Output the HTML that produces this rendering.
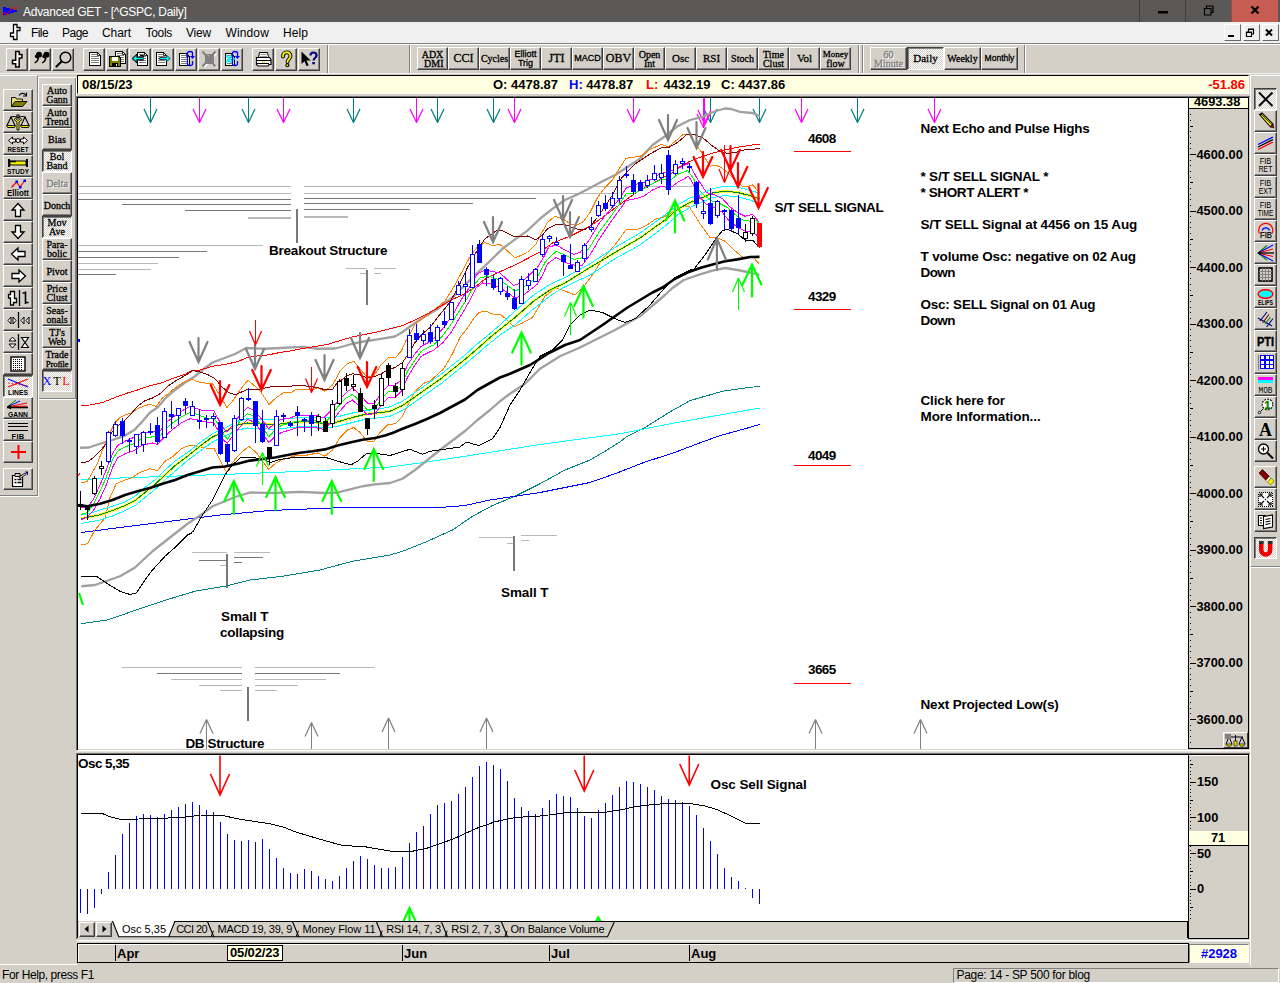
<!DOCTYPE html><html><head><meta charset="utf-8"><title>Advanced GET</title><style>
*{box-sizing:border-box;margin:0;padding:0}
html,body{width:1280px;height:983px;overflow:hidden;background:#d4d0c8;font-family:"Liberation Sans",sans-serif;font-size:12px;color:#000}
.abs{position:absolute}
#title{left:0;top:0;width:1280px;height:22px;background:#5b5957;color:#fff}
#title .t{left:23px;top:4.5px;font-size:12px;white-space:nowrap;letter-spacing:-0.27px}
.wb{top:0;height:22px;width:46px;border-left:1px solid #3f3e3d}
#menu{left:0;top:22px;width:1280px;height:21px;background:#f0f0f0}
#menu span{position:absolute;top:4px;font-size:12px;white-space:nowrap}
.mb{top:24px;width:17px;height:17px;background:#f0f0f0;border:1px solid;border-color:#fff #696969 #696969 #fff}
.btn{position:absolute;background:#d4d0c8;border:1px solid;border-color:#fff #404040 #404040 #fff;box-shadow:inset -1px -1px 0 #808080}
.btn.dn{border-color:#404040 #fff #fff #404040;box-shadow:inset 1px 1px 0 #808080;background-color:#e9e7e3;background-image:repeating-conic-gradient(#fff 0 25%,#d4d0c8 0 50%);background-size:2px 2px}
.btn svg{position:absolute;left:0;top:0}
.sb{font-family:"Liberation Serif",serif;-webkit-text-stroke:0.3px currentColor;font-size:10px;line-height:8px;text-align:center;white-space:nowrap;display:flex;flex-direction:column;align-items:center;justify-content:center;overflow:hidden}
.sb.dis{color:#808080;text-shadow:1px 1px 0 #fff}
.info{font-weight:bold;font-size:13px;white-space:nowrap;line-height:15px}
.lbl{position:absolute;font-weight:bold;white-space:nowrap;font-size:13px;line-height:16px}
.sc{position:absolute;font-weight:bold;font-size:12.8px;white-space:nowrap;line-height:14px}
.hl{position:absolute;height:1px}
.vl{position:absolute;width:1px}
.tab{position:absolute;top:923px;font-size:11px;white-space:nowrap;line-height:13px}
</style></head><body><div id="title" class="abs">
<svg class="abs" style="left:0;top:0" width="22" height="22" viewBox="0 0 22 22"><path d="M3 7h3v1h4v1h3v1h4v2h-3v1h-4v1h-4v1h-3z" fill="#0000ff" shape-rendering="crispEdges"/><path d="M2 15l2.500-2.500 2 2 7-7.500 1.500 2 3-2" stroke="#ff0000" stroke-width="1.100" fill="none" stroke-dasharray="1.400 .5"/></svg>
<div class="abs t">Advanced GET - [^GSPC, Daily]</div>
<div class="abs wb" style="left:1139px"><svg width="46" height="22" viewBox="0 0 46 22" ><rect x="18" y="11" width="10" height="2.500" fill="#000"/></svg></div>
<div class="abs wb" style="left:1185px"><svg width="46" height="22" viewBox="0 0 46 22" ><path d="M18.500 8.500h6.500v6.500h-6.500zM20.500 8.500v-2.500h6.500v6.500h-2" fill="none" stroke="#000" stroke-width="1.200"/></svg></div>
<div class="abs wb" style="left:1231px;width:47px;background:#c75c52;border-left:1px solid #9c4a43"><svg width="46" height="22" viewBox="0 0 46 22" ><path d="M19.5 6.5l7 7M26.5 6.5l-7 7" stroke="#000" stroke-width="2.2"/></svg></div>
</div>
<div id="menu" class="abs">
<svg class="abs" style="left:0;top:0" width="24" height="21" viewBox="0 22 24 21"><path d="M13.500 24.500h3.500v3h3v3h-3v9h-3.500v-3h-3v-3.500h3z" fill="#fff" stroke="#000" stroke-width="1.300"/></svg>
<span style="left:31px;letter-spacing:-0.58px">File</span>
<span style="left:62px;letter-spacing:-0.5px">Page</span>
<span style="left:102px;letter-spacing:-0.07px">Chart</span>
<span style="left:145.5px;letter-spacing:-0.3px">Tools</span>
<span style="left:186px;letter-spacing:-0.2px">View</span>
<span style="left:225.5px;letter-spacing:0.13px">Window</span>
<span style="left:283px;letter-spacing:0.08px">Help</span>
</div>
<div class="abs mb" style="left:1224px"><svg width="15" height="15" viewBox="0 0 15 15" ><rect x="3" y="10" width="6" height="2" fill="#000"/></svg></div>
<div class="abs mb" style="left:1243px"><svg width="15" height="15" viewBox="0 0 15 15" ><path d="M2.5 7.5h5v4h-5zM4.5 7v-2.5h5v4.5h-2" fill="none" stroke="#000" stroke-width="1.2"/><path d="M2 7h6M4 4h6" stroke="#000" stroke-width="1"/></svg></div>
<div class="abs mb" style="left:1262px"><svg width="15" height="15" viewBox="0 0 15 15" ><path d="M3 4.5l6 6M9 4.5l-6 6" stroke="#000" stroke-width="2"/></svg></div>
<div class="abs" style="left:0;top:43px;width:1280px;height:1px;background:#808080"></div>
<div class="abs" style="left:0;top:44px;width:1280px;height:1px;background:#fff"></div>
<div class="abs" style="left:0;top:73px;width:1280px;height:1px;background:#f2f1ed"></div>
<div class="btn " style="left:6px;top:48px;width:22px;height:23px;"><svg width="20" height="21" viewBox="0 0 20 21" ><path d="M8.700 2.500h3.500v3h2.700v3.500h-2.700v9h-3.500v-3.200h-3.200v-3.500h3.200z" fill="#fff" stroke="#000" stroke-width="1.500" stroke-linejoin="miter"/></svg></div>
<div class="btn " style="left:29px;top:48px;width:22px;height:23px;"><svg width="20" height="21" viewBox="0 0 20 21" ><g transform="translate(-1.500,-1.500) scale(1.150)"><path d="M6.500 6a2.600 2.600 0 1 1 2.700 2.800c0 2.500-1.500 4.400-3.600 5.200l-.5-1c1.600-.8 2.500-2 2.500-3.600-1.200-.1-3.500-1.400-1.100-3.400zM13 6a2.600 2.600 0 1 1 2.700 2.800c0 2.500-1.500 4.400-3.600 5.200l-.5-1c1.600-.8 2.500-2 2.500-3.600-1.200-.1-3.500-1.400-1.100-3.400z" fill="#000"/></g></svg></div>
<div class="btn " style="left:52px;top:48px;width:22px;height:23px;"><svg width="20" height="21" viewBox="0 0 20 21" ><circle cx="12.5" cy="8.500" r="5.300" fill="none" stroke="#000" stroke-width="1.5"/><path d="M8.500 12.500l-5 5" stroke="#000" stroke-width="2.200" stroke-linecap="round"/></svg></div>
<div class="btn " style="left:83px;top:48px;width:22px;height:23px;"><svg width="20" height="21" viewBox="0 0 20 21" ><path d="M5.5 3.5h8l3 3v10h-11z" fill="#fff" stroke="#000" shape-rendering="crispEdges"/><path d="M13.5 3.5v3h3" fill="none" stroke="#000" stroke-width=".8"/><path d="M7 5.5h6M7 7.5h8M7 9.5h8M7 11.5h8M7 13.5h8" stroke="#808080" shape-rendering="crispEdges"/></svg></div>
<div class="btn " style="left:106px;top:48px;width:22px;height:23px;"><svg width="20" height="21" viewBox="0 0 20 21" ><path d="M8.5 2.5h7l3 3v9h-10z" fill="#fff" stroke="#000" shape-rendering="crispEdges"/><path d="M15.5 2.5v3h3" fill="none" stroke="#000" stroke-width=".8"/><path d="M10 4.5h5M10 6.5h7M10 8.5h7M10 10.5h7M10 12.5h7" stroke="#808080" shape-rendering="crispEdges"/><path d="M2.500 7.500h9.500l1.500 1.500v8.500h-11z" fill="#808000" stroke="#000" shape-rendering="crispEdges"/><rect x="5" y="8" width="6" height="4" fill="#fff" shape-rendering="crispEdges"/><rect x="5" y="14" width="6" height="3" fill="#000" shape-rendering="crispEdges"/><rect x="9" y="15" width="1" height="2" fill="#fff" shape-rendering="crispEdges"/></svg></div>
<div class="btn " style="left:129px;top:48px;width:22px;height:23px;"><svg width="20" height="21" viewBox="0 0 20 21" ><path d="M7.5 3.5h7l3 3v10h-10z" fill="#fff" stroke="#000" shape-rendering="crispEdges"/><path d="M14.5 3.5v3h3" fill="none" stroke="#000" stroke-width=".8"/><path d="M9 5.5h5M9 7.5h7M9 9.5h7M9 11.5h7M9 13.5h7" stroke="#808080" shape-rendering="crispEdges"/><path d="M2 9.500l5-4.500v3h6.500v-1.500h-3.500M2 9.500l5 4.500v-3h6.500" fill="none" stroke="#000" stroke-width="1"/><path d="M2.800 9.500l4-3.500v2.500h6.500v2h-6.500v2.500z" fill="#0ff" stroke="#000" stroke-width=".7"/></svg></div>
<div class="btn " style="left:152px;top:48px;width:22px;height:23px;"><svg width="20" height="21" viewBox="0 0 20 21" ><path d="M3.5 3.5h7l3 3v10h-10z" fill="#fff" stroke="#000" shape-rendering="crispEdges"/><path d="M10.5 3.5v3h3" fill="none" stroke="#000" stroke-width=".8"/><path d="M5 5.5h5M5 7.5h7M5 9.5h7M5 11.5h7M5 13.5h7" stroke="#808080" shape-rendering="crispEdges"/><path d="M17.200 9.500l-4-3.500v2.500h-6.500v2h6.500v2.500z" fill="#0ff" stroke="#000" stroke-width=".7"/></svg></div>
<div class="btn " style="left:175px;top:48px;width:22px;height:23px;"><svg width="20" height="21" viewBox="0 0 20 21" ><path d="M3.5 4.5h7l3 3v9h-10z" fill="#fff" stroke="#000" shape-rendering="crispEdges"/><path d="M10.5 4.5v3h3" fill="none" stroke="#000" stroke-width=".8"/><path d="M5 6.5h5M5 8.5h7M5 10.5h7M5 12.5h7M5 14.5h7" stroke="#808080" shape-rendering="crispEdges"/><path d="M11.500 4c0-2 5-2 5 0v3M11.500 15c0 2 5 2 5 0v-3M11.500 4v11" stroke="#00f" fill="none" stroke-width="1.300"/><path d="M14 7h5l-2.500 3z" fill="#00f"/></svg></div>
<div class="btn " style="left:198px;top:48px;width:22px;height:23px;"><svg width="20" height="21" viewBox="0 0 20 21" ><path d="M4 3l12 14M16 3l-12 14" stroke="#fff" stroke-width="2.600" transform="translate(1,1)"/><rect x="6" y="5" width="9" height="10" fill="#808080"/><path d="M7 7h3M12 7h2M7 13h2M12 13h2" stroke="#d4d0c8"/><path d="M3.500 2.500l13 15M16.500 2.500l-13 15" stroke="#808080" stroke-width="2.200"/></svg></div>
<div class="btn " style="left:221px;top:48px;width:22px;height:23px;"><svg width="20" height="21" viewBox="0 0 20 21" ><path d="M3.5 4.5h6l3 3v9h-9z" fill="#fff" stroke="#000" shape-rendering="crispEdges"/><path d="M9.5 4.5v3h3" fill="none" stroke="#000" stroke-width=".8"/><path d="M5 6.5h4M5 8.5h6M5 10.5h6M5 12.5h6M5 14.5h6" stroke="#808080" shape-rendering="crispEdges"/><path d="M4 6.500l4 3.500-4 3.500M8 6.500l4 3.500-4 3.500" stroke="#0ff" stroke-width="1.800" fill="none"/><path d="M10.500 4c0-2 5-2 5 0v3M10.500 15c0 2 5 2 5 0v-3M10.500 4v11" stroke="#00f" fill="none" stroke-width="1.300"/><path d="M13 7h5l-2.500 3z" fill="#00f"/></svg></div>
<div class="btn " style="left:252px;top:48px;width:22px;height:23px;"><svg width="20" height="21" viewBox="0 0 20 21" ><path d="M6.500 3.500h8l1 5h-10z" fill="#fff" stroke="#000"/><path d="M7.500 5.500h6M7 7.500h7" stroke="#808080" stroke-width=".8"/><path d="M3.500 8.500h13l1.500 2v5h-2l-1 1.500h-10l-1.500-1.500z" fill="#fff" stroke="#000" stroke-width="1.200"/><path d="M3.500 11.500h14.500M4 14.500h12" stroke="#000" stroke-width="1.200"/><rect x="9" y="12.500" width="3" height="1.200" fill="#e8e000"/></svg></div>
<div class="btn " style="left:275px;top:48px;width:22px;height:23px;"><svg width="20" height="21" viewBox="0 0 20 21" ><path d="M7 7.500c0-5.500 7.500-5.500 7.500-.5 0 3-3 3-3 6" fill="none" stroke="#000" stroke-width="3.800" stroke-linecap="round"/><path d="M7 7.500c0-5.500 7.500-5.500 7.500-.5 0 3-3 3-3 6" fill="none" stroke="#f0f000" stroke-width="1.900" stroke-linecap="round"/><circle cx="11.400" cy="16.200" r="2" fill="#000"/><circle cx="11.400" cy="16.200" r="1" fill="#f0f000"/></svg></div>
<div class="btn " style="left:298px;top:48px;width:22px;height:23px;"><svg width="20" height="21" viewBox="0 0 20 21" ><path d="M2.500 2.500v12.500l3-2.800 2.200 5 2-.9-2.200-4.800h4.200z" fill="#000"/><path d="M11.500 6.500c0-4 6-4 6 0 0 2.500-3 2.500-3 5" fill="none" stroke="#000080" stroke-width="2.200"/><rect x="13.300" y="13" width="2.600" height="2.300" fill="#000080"/></svg></div>
<div class="abs" style="left:327px;top:45px;width:1px;height:28px;background:#808080"></div><div class="abs" style="left:328px;top:45px;width:1px;height:28px;background:#fff"></div>
<div class="abs" style="left:409px;top:45px;width:1px;height:28px;background:#808080"></div><div class="abs" style="left:410px;top:45px;width:1px;height:28px;background:#fff"></div>
<div class="abs" style="left:858px;top:45px;width:1px;height:28px;background:#808080"></div><div class="abs" style="left:859px;top:45px;width:1px;height:28px;background:#fff"></div>
<div class="abs" style="left:1024px;top:45px;width:1px;height:28px;background:#808080"></div><div class="abs" style="left:1025px;top:45px;width:1px;height:28px;background:#fff"></div>
<div class="abs" style="left:862px;top:45px;width:1px;height:28px;background:#808080"></div><div class="abs" style="left:863px;top:45px;width:1px;height:28px;background:#fff"></div>
<div class="btn sb " style="left:417px;top:47px;width:31px;height:23px;font-size:10px;line-height:9px;"><div>ADX</div><div>&nbsp;DMI</div></div>
<div class="btn sb " style="left:448px;top:47px;width:31px;height:23px;font-size:12px;line-height:9px;"><div>CCI</div></div>
<div class="btn sb " style="left:479px;top:47px;width:31px;height:23px;font-size:10px;line-height:9px;"><div>Cycles</div></div>
<div class="btn sb " style="left:510px;top:47px;width:31px;height:23px;font-size:10px;line-height:9px;font-family:'Liberation Sans',sans-serif;font-size:9px;"><div>Elliott</div><div>Trig</div></div>
<div class="btn sb " style="left:541px;top:47px;width:31px;height:23px;font-size:12px;line-height:9px;"><div>JTI</div></div>
<div class="btn sb " style="left:572px;top:47px;width:31px;height:23px;font-size:9px;line-height:9px;font-family:'Liberation Sans',sans-serif;font-size:9px;"><div>MACD</div></div>
<div class="btn sb " style="left:603px;top:47px;width:31px;height:23px;font-size:12px;line-height:9px;"><div>OBV</div></div>
<div class="btn sb " style="left:634px;top:47px;width:31px;height:23px;font-size:10px;line-height:9px;"><div>Open</div><div>Int</div></div>
<div class="btn sb " style="left:665px;top:47px;width:31px;height:23px;font-size:11px;line-height:9px;"><div>Osc</div></div>
<div class="btn sb " style="left:696px;top:47px;width:31px;height:23px;font-size:11px;line-height:9px;"><div>RSI</div></div>
<div class="btn sb " style="left:727px;top:47px;width:31px;height:23px;font-size:10px;line-height:9px;"><div>Stoch</div></div>
<div class="btn sb " style="left:758px;top:47px;width:31px;height:23px;font-size:10px;line-height:9px;"><div>Time</div><div>Clust</div></div>
<div class="btn sb " style="left:789px;top:47px;width:31px;height:23px;font-size:11px;line-height:9px;"><div>Vol</div></div>
<div class="btn sb " style="left:820px;top:47px;width:31px;height:23px;font-size:10px;line-height:9px;"><div><span style="font-size:9px">Money</span></div><div>flow</div></div>
<div class="btn sb dis" style="left:870px;top:47px;width:37px;height:23px;font-size:10px;line-height:9px;"><div>60</div><div>Minute</div></div>
<div class="btn sb dn" style="left:907px;top:47px;width:37px;height:23px;font-size:11px;line-height:9px;"><div>Daily</div></div>
<div class="btn sb " style="left:944px;top:47px;width:37px;height:23px;font-size:10px;line-height:9px;"><div>Weekly</div></div>
<div class="btn sb " style="left:981px;top:47px;width:37px;height:23px;font-size:8.5px;line-height:9px;font-family:'Liberation Sans',sans-serif;"><div>Monthly</div></div>
<div class="abs" style="left:0;top:75px;width:37px;height:1px;background:#fff"></div>
<div class="abs" style="left:1250px;top:75px;width:30px;height:1px;background:#fff"></div>
<div class="abs" style="left:37px;top:76px;width:1px;height:420px;background:#808080"></div>
<div class="abs" style="left:38px;top:77px;width:1px;height:420px;background:#fff"></div>
<div class="abs" style="left:0px;top:495px;width:38px;height:1px;background:#808080"></div><div class="abs" style="left:0px;top:496px;width:39px;height:1px;background:#fff"></div>
<div class="abs" style="left:38px;top:77px;width:38px;height:1px;background:#fff"></div>
<div class="abs" style="left:75px;top:78px;width:1px;height:320px;background:#808080"></div><div class="abs" style="left:76px;top:78px;width:1px;height:321px;background:#fff"></div>
<div class="btn " style="left:3px;top:89px;width:30px;height:22px;"><svg width="28" height="20" viewBox="0 0 28 20" ><path d="M7.500 7.500h4l1 1.500h6v7.500h-11z" fill="#e8e070" stroke="#000" stroke-width=".9"/><path d="M7.500 16.500l3.500-5h12l-4.500 5z" fill="#808000" stroke="#000" stroke-width=".9"/><path d="M15 5.500c1.500-2.500 5-3 7-.5M22.500 2.500v3.500h-3.500" fill="none" stroke="#000" stroke-width="1.100"/></svg></div>
<div class="btn " style="left:3px;top:111px;width:30px;height:22px;"><svg width="28" height="20" viewBox="0 0 28 20" ><path d="M13 3h2v3h-2zM6 5.500c3-2 5-1 8 0c3-1 5-2 8 0" fill="none" stroke="#000" stroke-width="1.100"/><path d="M7 5l-4 8.500M7 5l4 8.500M21 5l-4 8.500M21 5l4 8.500" stroke="#000" fill="none" stroke-width="1.100"/><path d="M2.500 13.500h9l-1 2h-7zM16.500 13.500h9l-1 2h-7z" fill="#f0f000" stroke="#000" stroke-width=".9"/><path d="M10 7.500l3 2.500v8h2v-8l3-2.500-1.500-1-2.500 2-2.500-2z" fill="#f0f000" stroke="#000" stroke-width=".9"/></svg></div>
<div class="btn " style="left:3px;top:133px;width:30px;height:22px;"><svg width="28" height="20" viewBox="0 0 28 20" ><path d="M4.500 6.500l4-3.500v2h3v3h-3v2z" fill="#fff" stroke="#000" stroke-width="1"/><path d="M23.500 6.500l-4-3.500v2h-3v3h3v2z" fill="#fff" stroke="#000" stroke-width="1"/><circle cx="14" cy="6.500" r="2" fill="#fff" stroke="#000" stroke-width="1"/><text x="14" y="17.5" text-anchor="middle" font-family="Liberation Sans,sans-serif" font-weight="bold" font-size="7.5" letter-spacing="0" fill="#000" textLength="21" lengthAdjust="spacingAndGlyphs">RESET</text></svg></div>
<div class="btn " style="left:3px;top:155px;width:30px;height:22px;"><svg width="28" height="20" viewBox="0 0 28 20" ><path d="M5 3v8M23 3v8" stroke="#000" stroke-width="2"/><rect x="6" y="5" width="16" height="4" fill="#f0f000" stroke="#000" stroke-width="1"/><path d="M6 5.500h6" stroke="#000" stroke-width="1.500"/><text x="14" y="18" text-anchor="middle" font-family="Liberation Sans,sans-serif" font-weight="bold" font-size="7.5" letter-spacing="0" fill="#000" textLength="22" lengthAdjust="spacingAndGlyphs">STUDY</text></svg></div>
<div class="btn " style="left:3px;top:177px;width:30px;height:22px;"><svg width="28" height="20" viewBox="0 0 28 20" ><path d="M7.500 9.500l5-5.500 3.500 5 4.500-6" stroke="#f00" fill="none" stroke-width="1.200"/><rect x="11.500" y="2.500" width="2.500" height="2.500" fill="#00f"/><rect x="15" y="8" width="2.500" height="2.500" fill="#00f"/><rect x="19.500" y="1.500" width="2.500" height="2.500" fill="#00f"/><text x="14" y="18" text-anchor="middle" font-family="Liberation Sans,sans-serif" font-weight="bold" font-size="9" letter-spacing="0" fill="#000" textLength="22" lengthAdjust="spacingAndGlyphs">Elliott</text></svg></div>
<div class="btn " style="left:3px;top:199px;width:30px;height:22px;"><svg width="28" height="20" viewBox="0 0 28 20" ><path d="M14 3.500l6 6.500h-3.500v6.500h-5v-6.500h-3.500z" fill="#fff" stroke="#000" stroke-width="1.300"/></svg></div>
<div class="btn " style="left:3px;top:221px;width:30px;height:22px;"><svg width="28" height="20" viewBox="0 0 28 20" ><path d="M14 16.500l6-6.500h-3.500v-6.500h-5v6.500h-3.500z" fill="#fff" stroke="#000" stroke-width="1.300"/></svg></div>
<div class="btn " style="left:3px;top:243px;width:30px;height:22px;"><svg width="28" height="20" viewBox="0 0 28 20" ><path d="M7.500 10l6.500-6v3.500h7v5h-7v3.500z" fill="#fff" stroke="#000" stroke-width="1.300"/></svg></div>
<div class="btn " style="left:3px;top:265px;width:30px;height:22px;"><svg width="28" height="20" viewBox="0 0 28 20" ><path d="M21.500 10l-6.500-6v3.500h-7v5h7v3.500z" fill="#fff" stroke="#000" stroke-width="1.300"/></svg></div>
<div class="btn " style="left:3px;top:287px;width:30px;height:22px;"><svg width="28" height="20" viewBox="0 0 28 20" ><path d="M6.500 3.500h4v7h2v4h-3v2.500h-3v-7h-2v-3.500h2z" fill="#fff" stroke="#000" stroke-width="1.300"/><path d="M15.500 2v16" stroke="#000" stroke-width="1.300"/><path d="M21.500 3.500v12.500M18.500 5h3M21.500 14.500h3" stroke="#000" stroke-width="1.600" fill="none"/></svg></div>
<div class="btn " style="left:3px;top:309px;width:30px;height:22px;"><svg width="28" height="20" viewBox="0 0 28 20" ><path d="M14.500 2v16" stroke="#000" stroke-width="1.300"/><path d="M7 7l-3 3.500 3 3.500zM9 7l3 3.500-3 3.500zM20 7l-3 3.500 3 3.500zM25 7l-3 3.500 3 3.500z" fill="#fff" stroke="#000" stroke-width="1"/></svg></div>
<div class="btn " style="left:3px;top:331px;width:30px;height:22px;"><svg width="28" height="20" viewBox="0 0 28 20" ><path d="M14.500 2v16" stroke="#000" stroke-width="1.300"/><path d="M5 9l3.500-4 3.500 4zM5 12l3.500 4 3.500-4z" fill="#fff" stroke="#000" stroke-width="1"/><path d="M17.500 5.500h7l-7 10h7z" fill="#fff" stroke="#000" stroke-width="1.100"/></svg></div>
<div class="btn " style="left:3px;top:353px;width:30px;height:22px;"><svg width="28" height="20" viewBox="0 0 28 20" ><rect x="7" y="3" width="14" height="14" fill="#fff" stroke="#000" stroke-width="1.400"/><path d="M9 5.500h10M9 7.500h10M9 9.500h10M9 11.500h10M9 13.500h10M9 15.500h10" stroke="#000" stroke-dasharray="1 1" shape-rendering="crispEdges"/></svg></div>
<div class="btn dn" style="left:3px;top:375px;width:30px;height:22px;"><svg width="28" height="20" viewBox="0 0 28 20" ><path d="M4 3l20 8" stroke="#00f" stroke-width="1.200"/><path d="M4 11l20-8" stroke="#f00" stroke-width="1.200"/><path d="M4 7l20 3" stroke="#f00" stroke-width=".8" stroke-dasharray="2 1.500"/><text x="14" y="18.5" text-anchor="middle" font-family="Liberation Sans,sans-serif" font-weight="bold" font-size="7.5" letter-spacing="0" fill="#000" textLength="20" lengthAdjust="spacingAndGlyphs">LINES</text></svg></div>
<div class="btn " style="left:3px;top:397px;width:30px;height:22px;"><svg width="28" height="20" viewBox="0 0 28 20" ><path d="M3 9l9-7" stroke="#080"/><path d="M3 9l13-6" stroke="#00f"/><path d="M3 9l20-4M3 9l20-1" stroke="#f00"/><path d="M3 9.500h21" stroke="#000" stroke-width="1.600"/><path d="M3 9l4-2.500v5z" fill="#000"/><text x="14" y="18.5" text-anchor="middle" font-family="Liberation Sans,sans-serif" font-weight="bold" font-size="7.5" letter-spacing="0" fill="#000" textLength="20" lengthAdjust="spacingAndGlyphs">GANN</text></svg></div>
<div class="btn " style="left:3px;top:419px;width:30px;height:22px;"><svg width="28" height="20" viewBox="0 0 28 20" ><path d="M4 3.500h20M4 6.500h20M4 10.500h20" stroke="#000" stroke-width="1.300" shape-rendering="crispEdges"/><text x="14" y="18.5" text-anchor="middle" font-family="Liberation Sans,sans-serif" font-weight="bold" font-size="7.5" letter-spacing="0.3" fill="#000">FIB</text></svg></div>
<div class="btn " style="left:3px;top:441px;width:30px;height:22px;"><svg width="28" height="20" viewBox="0 0 28 20" ><path d="M14.500 3v14M7 10h15" stroke="#f00" stroke-width="2"/></svg></div>
<div class="btn " style="left:3px;top:468px;width:30px;height:22px;"><svg width="28" height="20" viewBox="0 0 28 20" ><path d="M8.500 6.500h10v11h-10z" fill="#fff" stroke="#000" stroke-width="1.200"/><path d="M11 4.500h5v3h-5z" fill="#d4d0c8" stroke="#000"/><path d="M10.500 10.500h2M13.500 10.500h4M10.500 13.500h2M13.500 13.500h4" stroke="#000" stroke-width="1.300"/><path d="M15 8l6-4 1 1.500-6 4z" fill="#d4d0c8" stroke="#000" stroke-width=".8"/><path d="M21 2.500h3v4z" fill="#000080"/></svg></div>
<div class="btn sb " style="left:42px;top:84px;width:30px;height:22px;font-size:10px;line-height:9px;"><div>Auto</div><div>Gann</div></div>
<div class="btn sb " style="left:42px;top:106px;width:30px;height:22px;font-size:10px;line-height:9px;"><div>Auto</div><div>Trend</div></div>
<div class="btn sb " style="left:42px;top:128px;width:30px;height:22px;font-size:10px;line-height:9px;"><div>Bias</div></div>
<div class="btn sb dn" style="left:42px;top:150px;width:30px;height:22px;font-size:10px;line-height:9px;"><div>Bol</div><div>Band</div></div>
<div class="btn sb dis" style="left:42px;top:172px;width:30px;height:22px;font-size:10px;line-height:9px;"><div>Delta</div></div>
<div class="btn sb " style="left:42px;top:194px;width:30px;height:22px;font-size:10px;line-height:9px;"><div>Donch</div></div>
<div class="btn sb dn" style="left:42px;top:216px;width:30px;height:22px;font-size:10px;line-height:9px;"><div>Mov</div><div>Ave</div></div>
<div class="btn sb " style="left:42px;top:238px;width:30px;height:22px;font-size:10px;line-height:9px;"><div>Para-</div><div>bolic</div></div>
<div class="btn sb " style="left:42px;top:260px;width:30px;height:22px;font-size:10px;line-height:9px;"><div>Pivot</div></div>
<div class="btn sb " style="left:42px;top:282px;width:30px;height:22px;font-size:10px;line-height:9px;"><div>Price</div><div>Clust</div></div>
<div class="btn sb " style="left:42px;top:304px;width:30px;height:22px;font-size:10px;line-height:9px;"><div>Seas-</div><div>onals</div></div>
<div class="btn sb " style="left:42px;top:326px;width:30px;height:22px;font-size:10px;line-height:9px;"><div>TJ's</div><div>Web</div></div>
<div class="btn sb " style="left:42px;top:348px;width:30px;height:22px;font-size:10px;line-height:9px;"><div>Trade</div><div><span style="font-size:9px;letter-spacing:-0.3px">Profile</span></div></div>
<div class="btn sb dn" style="left:42px;top:370px;width:30px;height:22px;font-size:12.5px;line-height:13px;flex-direction:row;letter-spacing:1.5px;-webkit-text-stroke:0"><span style="color:#00f">X</span><span>T</span><span style="color:#f00">L</span></div>
<div class="abs" style="left:39px;top:398px;width:37px;height:1px;background:#808080"></div><div class="abs" style="left:39px;top:399px;width:38px;height:1px;background:#fff"></div>
<div class="abs" style="left:77px;top:75px;width:1172px;height:19px;background:#ffffe1;border:1px solid;border-color:#000 #fff #fff #000"></div>
<div class="abs info" style="left:82px;top:77px;">08/15/23</div>
<div class="abs info" style="left:493px;top:77px;">O: 4478.87</div>
<div class="abs info" style="left:569px;top:77px;"><span style="color:#00f">H:</span> 4478.87</div>
<div class="abs info" style="left:646px;top:77px;"><span style="color:#f00">L:</span><span style="margin-left:1.6px"> 4432.19</span></div>
<div class="abs info" style="left:721px;top:77px;">C: 4437.86</div>
<div class="abs info" style="left:0px;top:77px;left:auto;right:35px;color:#f00">-51.86</div>
<div class="abs" style="left:76px;top:96px;width:1174px;height:1px;background:#707070"></div><div class="abs" style="left:76px;top:96px;width:1px;height:654px;background:#707070"></div>
<div class="abs" style="left:77px;top:97px;width:1172px;height:1px;background:#000"></div><div class="abs" style="left:77px;top:97px;width:1px;height:653px;background:#000"></div>
<div class="abs" style="left:78px;top:98px;width:1110px;height:651px;background:#fff"></div>
<div class="abs" style="left:77px;top:750px;width:1174px;height:1px;background:#fff"></div><div class="abs" style="left:1250px;top:97px;width:1px;height:654px;background:#fff"></div><div class="abs" style="left:77px;top:751px;width:1174px;height:1px;background:#e6e4df"></div>
<div class="abs" style="left:1188px;top:97px;width:61px;height:652px;background:#d4d0c8;border:1px solid #000"></div>
<svg class="abs" style="left:78px;top:98px" width="1110" height="651" viewBox="78 98 1110 651"><path d="M78 186.5H291" stroke="#b8b8b8" stroke-width="1" shape-rendering="crispEdges"/><path d="M78 193.5H291" stroke="#b8b8b8" stroke-width="1" shape-rendering="crispEdges"/><path d="M78 199.5H291" stroke="#787878" stroke-width="1" shape-rendering="crispEdges"/><path d="M122 204.5H291" stroke="#787878" stroke-width="1" shape-rendering="crispEdges"/><path d="M185 210.5H291" stroke="#787878" stroke-width="1" shape-rendering="crispEdges"/><path d="M248 217.5H291" stroke="#b8b8b8" stroke-width="2" shape-rendering="crispEdges"/><path d="M304 186.5H694" stroke="#b8b8b8" stroke-width="1" shape-rendering="crispEdges"/><path d="M304 193.5H619" stroke="#b8b8b8" stroke-width="1" shape-rendering="crispEdges"/><path d="M304 198.5H536" stroke="#787878" stroke-width="1" shape-rendering="crispEdges"/><path d="M304 203.5H473" stroke="#787878" stroke-width="1" shape-rendering="crispEdges"/><path d="M304 209.5H410" stroke="#787878" stroke-width="1" shape-rendering="crispEdges"/><path d="M304 216.5H348" stroke="#b8b8b8" stroke-width="2" shape-rendering="crispEdges"/><path d="M297 209V243" stroke="#787878" stroke-width="2" shape-rendering="crispEdges"/><path d="M78 245.5H263" stroke="#b8b8b8" stroke-width="1" shape-rendering="crispEdges"/><path d="M78 251.5H207" stroke="#787878" stroke-width="1" shape-rendering="crispEdges"/><path d="M78 257.5H179" stroke="#787878" stroke-width="1" shape-rendering="crispEdges"/><path d="M78 263.5H158" stroke="#b8b8b8" stroke-width="1" shape-rendering="crispEdges"/><path d="M78 269.5H151" stroke="#b8b8b8" stroke-width="1" shape-rendering="crispEdges"/><path d="M78 274.5H116" stroke="#787878" stroke-width="1" shape-rendering="crispEdges"/><path d="M346 268.5H367" stroke="#b8b8b8" stroke-width="1" shape-rendering="crispEdges"/><path d="M374 268.5H396" stroke="#b8b8b8" stroke-width="1" shape-rendering="crispEdges"/><path d="M360 273.5H367" stroke="#b8b8b8" stroke-width="1" shape-rendering="crispEdges"/><path d="M374 273.5H381" stroke="#b8b8b8" stroke-width="1" shape-rendering="crispEdges"/><path d="M367 270V305" stroke="#787878" stroke-width="2" shape-rendering="crispEdges"/><path d="M192 552.5H227" stroke="#b8b8b8" stroke-width="1" shape-rendering="crispEdges"/><path d="M234 552.5H270" stroke="#b8b8b8" stroke-width="1" shape-rendering="crispEdges"/><path d="M199 560.5H227" stroke="#787878" stroke-width="1" shape-rendering="crispEdges"/><path d="M234 557.5H263" stroke="#787878" stroke-width="1" shape-rendering="crispEdges"/><path d="M220 565.5H227" stroke="#b8b8b8" stroke-width="1" shape-rendering="crispEdges"/><path d="M234 562.5H242" stroke="#787878" stroke-width="1" shape-rendering="crispEdges"/><path d="M227 554V588" stroke="#787878" stroke-width="2" shape-rendering="crispEdges"/><path d="M479 537.5H513" stroke="#b8b8b8" stroke-width="1" shape-rendering="crispEdges"/><path d="M521 535.5H557" stroke="#b8b8b8" stroke-width="1" shape-rendering="crispEdges"/><path d="M507 543.5H513" stroke="#b8b8b8" stroke-width="1" shape-rendering="crispEdges"/><path d="M521 540.5H529" stroke="#b8b8b8" stroke-width="1" shape-rendering="crispEdges"/><path d="M514 536V571" stroke="#787878" stroke-width="2" shape-rendering="crispEdges"/><path d="M122 667.5H242" stroke="#b8b8b8" stroke-width="1" shape-rendering="crispEdges"/><path d="M255 667.5H375" stroke="#b8b8b8" stroke-width="1" shape-rendering="crispEdges"/><path d="M157 673.5H242" stroke="#787878" stroke-width="1" shape-rendering="crispEdges"/><path d="M255 673.5H340" stroke="#787878" stroke-width="1" shape-rendering="crispEdges"/><path d="M171 679.5H242" stroke="#b8b8b8" stroke-width="1" shape-rendering="crispEdges"/><path d="M255 679.5H326" stroke="#b8b8b8" stroke-width="1" shape-rendering="crispEdges"/><path d="M199 685.5H242" stroke="#b8b8b8" stroke-width="1" shape-rendering="crispEdges"/><path d="M255 685.5H298" stroke="#b8b8b8" stroke-width="1" shape-rendering="crispEdges"/><path d="M220 690.5H242" stroke="#b8b8b8" stroke-width="1" shape-rendering="crispEdges"/><path d="M255 690.5H277" stroke="#b8b8b8" stroke-width="1" shape-rendering="crispEdges"/><path d="M248 687V721" stroke="#787878" stroke-width="2" shape-rendering="crispEdges"/><path d="M150.5 98V122.5" stroke="#008080" stroke-width="1" shape-rendering="crispEdges"/><path d="M144.0 109.0L150.5 122.5L157.0 109.0" fill="none" stroke="#008080" stroke-width="1.25" stroke-linejoin="bevel"/><path d="M199.5 98V122.5" stroke="#ff00ff" stroke-width="1" shape-rendering="crispEdges"/><path d="M193.0 109.0L199.5 122.5L206.0 109.0" fill="none" stroke="#ff00ff" stroke-width="1.25" stroke-linejoin="bevel"/><path d="M248.5 98V122.5" stroke="#008080" stroke-width="1" shape-rendering="crispEdges"/><path d="M242.0 109.0L248.5 122.5L255.0 109.0" fill="none" stroke="#008080" stroke-width="1.25" stroke-linejoin="bevel"/><path d="M283.5 98V122.5" stroke="#ff00ff" stroke-width="1" shape-rendering="crispEdges"/><path d="M277.0 109.0L283.5 122.5L290.0 109.0" fill="none" stroke="#ff00ff" stroke-width="1.25" stroke-linejoin="bevel"/><path d="M353.5 98V122.5" stroke="#008080" stroke-width="1" shape-rendering="crispEdges"/><path d="M347.0 109.0L353.5 122.5L360.0 109.0" fill="none" stroke="#008080" stroke-width="1.25" stroke-linejoin="bevel"/><path d="M416.5 98V122.5" stroke="#ff00ff" stroke-width="1" shape-rendering="crispEdges"/><path d="M410.0 109.0L416.5 122.5L423.0 109.0" fill="none" stroke="#ff00ff" stroke-width="1.25" stroke-linejoin="bevel"/><path d="M437.5 98V122.5" stroke="#008080" stroke-width="1" shape-rendering="crispEdges"/><path d="M431.0 109.0L437.5 122.5L444.0 109.0" fill="none" stroke="#008080" stroke-width="1.25" stroke-linejoin="bevel"/><path d="M493.5 98V122.5" stroke="#008080" stroke-width="1" shape-rendering="crispEdges"/><path d="M487.0 109.0L493.5 122.5L500.0 109.0" fill="none" stroke="#008080" stroke-width="1.25" stroke-linejoin="bevel"/><path d="M514.5 98V122.5" stroke="#ff00ff" stroke-width="1" shape-rendering="crispEdges"/><path d="M508.0 109.0L514.5 122.5L521.0 109.0" fill="none" stroke="#ff00ff" stroke-width="1.25" stroke-linejoin="bevel"/><path d="M633.5 98V122.5" stroke="#ff00ff" stroke-width="1" shape-rendering="crispEdges"/><path d="M627.0 109.0L633.5 122.5L640.0 109.0" fill="none" stroke="#ff00ff" stroke-width="1.25" stroke-linejoin="bevel"/><path d="M710.5 98V122.5" stroke="#008080" stroke-width="1" shape-rendering="crispEdges"/><path d="M704.0 109.0L710.5 122.5L717.0 109.0" fill="none" stroke="#008080" stroke-width="1.25" stroke-linejoin="bevel"/><path d="M759.5 98V122.5" stroke="#008080" stroke-width="1" shape-rendering="crispEdges"/><path d="M753.0 109.0L759.5 122.5L766.0 109.0" fill="none" stroke="#008080" stroke-width="1.25" stroke-linejoin="bevel"/><path d="M801.5 98V122.5" stroke="#ff00ff" stroke-width="1" shape-rendering="crispEdges"/><path d="M795.0 109.0L801.5 122.5L808.0 109.0" fill="none" stroke="#ff00ff" stroke-width="1.25" stroke-linejoin="bevel"/><path d="M857.5 98V122.5" stroke="#008080" stroke-width="1" shape-rendering="crispEdges"/><path d="M851.0 109.0L857.5 122.5L864.0 109.0" fill="none" stroke="#008080" stroke-width="1.25" stroke-linejoin="bevel"/><path d="M934.5 98V122.5" stroke="#ff00ff" stroke-width="1" shape-rendering="crispEdges"/><path d="M928.0 109.0L934.5 122.5L941.0 109.0" fill="none" stroke="#ff00ff" stroke-width="1.25" stroke-linejoin="bevel"/><path d="M703.5 98V127.5" stroke="#ff00ff" stroke-width="1" shape-rendering="crispEdges"/><path d="M697.0 114.0L703.5 127.5L710.0 114.0" fill="none" stroke="#ff00ff" stroke-width="1.25" stroke-linejoin="bevel"/><path d="M704.5 98V123.5" stroke="#ff00ff" stroke-width="1" shape-rendering="crispEdges"/><path d="M698.0 110.0L704.5 123.5L711.0 110.0" fill="none" stroke="#ff00ff" stroke-width="1.25" stroke-linejoin="bevel"/><path d="M206.5 749V719.5" stroke="#808080" stroke-width="1" shape-rendering="crispEdges"/><path d="M200.0 733.5L206.5 719.5L213.0 733.5" fill="none" stroke="#808080" stroke-width="1.25" stroke-linejoin="bevel"/><path d="M311.5 749V722.5" stroke="#808080" stroke-width="1" shape-rendering="crispEdges"/><path d="M305.0 736.5L311.5 722.5L318.0 736.5" fill="none" stroke="#808080" stroke-width="1.25" stroke-linejoin="bevel"/><path d="M388.5 749V718" stroke="#808080" stroke-width="1" shape-rendering="crispEdges"/><path d="M382.0 732L388.5 718L395.0 732" fill="none" stroke="#808080" stroke-width="1.25" stroke-linejoin="bevel"/><path d="M486.5 749V718" stroke="#808080" stroke-width="1" shape-rendering="crispEdges"/><path d="M480.0 732L486.5 718L493.0 732" fill="none" stroke="#808080" stroke-width="1.25" stroke-linejoin="bevel"/><path d="M815.5 749V719.5" stroke="#808080" stroke-width="1" shape-rendering="crispEdges"/><path d="M809.0 733.5L815.5 719.5L822.0 733.5" fill="none" stroke="#808080" stroke-width="1.25" stroke-linejoin="bevel"/><path d="M920.5 749V719.5" stroke="#808080" stroke-width="1" shape-rendering="crispEdges"/><path d="M914.0 733.5L920.5 719.5L927.0 733.5" fill="none" stroke="#808080" stroke-width="1.25" stroke-linejoin="bevel"/><polyline points="81.25,623.75 107.5,620 132.5,611.25 170,598.75 195,591.25 225,586.25 250,580 282.5,576.25 320,570 352.5,561.25 390,555 402.5,551.25 427.5,541.25 452.5,530 472.5,516.25 492.5,505.5 515,496.25 540,483.75 565,470 590,460 605,451.25 620,441.9 626.25,436.9 645,427.5 670,411.9 690,400.6 707.5,395.6 722.5,391.25 745,388 760,386.25" fill="none" stroke="#008080" stroke-width="1" stroke-linejoin="round" shape-rendering="crispEdges"/><polyline points="81.25,532.5 120,527.5 170,521.25 220,515 270,510.5 320,508.5 345,507.5 440,507.5 465,505.5 490,500 515,496.25 540,492.5 565,487.5 590,482.5 615,473.75 643.75,462.5 676.25,451.9 697.5,443.75 720,435.6 745,428.75 760,424.4" fill="none" stroke="#0000ff" stroke-width="1" stroke-linejoin="round" shape-rendering="crispEdges"/><polyline points="81.25,479.4 160,476.6 235,474 310,471 390,467 420,463 465,456.25 540,444.5 620,433.75 670,423.75 720,415 760,408" fill="none" stroke="#00ffff" stroke-width="1" stroke-linejoin="round" shape-rendering="crispEdges"/><polyline points="81.25,586.25 95,585 120,576.25 135,567.5 152.5,551.25 170,537.5 187.5,523.75 196.25,518 202.5,513.75 212.5,506.25 225,501.25 235,497 250,492.5 275,493 300,491.9 325,493 337.5,492.5 350,489.4 362.5,486.25 375,484.4 390,483 402.5,478.75 415,470 440,450 465,431 477.5,420 490,410 500,401.25 510,393.75 525,383.75 540,368.75 560,356.25 580,347.5 595,340 615,330 640,316.25 665,295 672.5,288 683.75,280 700,274.4 712.5,270.6 725,268 737.5,270 750,272.5 759.5,275" fill="none" stroke="#a0a0a0" stroke-width="2.3" stroke-linejoin="round"/><polyline points="80,447.75 88.75,447.5 100,443.75 112.5,440 125,435.6 135,429.4 142.5,421.25 150,412.5 157.5,407.5 165,398.75 175,390 185,382.5 195,376.25 205,368 212.5,362.5 222.5,358.75 235,354 246.25,348 265,348.75 280,348 302.5,346.9 317.5,348.75 335,348.5 340,347.25 352.5,343.75 365,341.25 377.5,339.4 395,336.5 402.5,332 415,323 427.5,315 436,310 452.5,297.5 470,280 490,261 502.5,248.75 515,239.4 527.5,230.6 540,218.75 552.5,208.75 565,200 577.5,194.4 590,188 602.5,181.25 615,175 627.5,167 640,158.75 652.5,145 665,136.25 677.5,126.25 690,120 702.5,116.9 715,111.25 725,108.5 731.25,109 740,111.9 752.5,113 760,116.25" fill="none" stroke="#a0a0a0" stroke-width="2.3" stroke-linejoin="round"/><polyline points="81.25,545 87.5,543.75 95,530 105,518 110,497.5 116.25,483.75 125,480 131.25,478 140,472.5 150,468.75 157.5,470.6 165,461.25 172.5,456.9 181.25,448.75 190,445 200,446.9 206.25,448 213.75,448 218.75,457.5 225,470 226.9,471.5 232.5,462.5 240,453.75 248.75,446.25 256.25,452.5 262.5,461.25 268.75,469.4 275,463.75 281.25,460 290,457.5 297.5,455 307.5,455 317.5,453 325,456.25 332.5,450 340,437.5 347.5,430 353.75,427.5 360,432.5 367.5,441.9 373.75,441.25 380,432.5 387.5,425 395,423.75 402.5,416.25 407.5,406.25 415,391.25 425,382.5 430,381.25 443.75,368.75 452.5,353.75 460,337.5 468.75,326.25 472.5,320 478.75,312.5 486,311 492.5,314 500,314 506,319 513.75,327 522.5,323 532.5,317.5 540,305 545,296 550,292.5 556,288 565,291 575,295 582.5,288 592.5,275 602.5,258.75 615,245 626.25,229.4 637.5,229.4 646.25,225.6 655,219.4 663.75,217 672.5,212 681.25,206.25 688.75,206.25 693.75,213.75 700,223.75 710,237.5 717.5,238 725,241.25 732.5,248.75 743.75,258 752.5,256.25 759.5,264.4" fill="none" stroke="#ff8000" stroke-width="1" stroke-linejoin="round" shape-rendering="crispEdges"/><polyline points="81.25,483 87.5,481.25 93.75,470 97.5,463 102.5,450 108.75,435 115,422.5 120,417.5 125,415 131.25,413 137.5,408.75 145,405.6 150,404.4 156.25,406.25 162.5,398 167.5,394.4 175,388 181.25,383.75 187,380.5 193,379.75 200,382.5 212.5,383.75 218.75,393.75 226.9,407.5 232.5,401.25 240,390 248,380.25 255,386.25 261.25,392.5 269,404.4 275,398.75 283.75,392.25 290,393 296.25,389.4 305,389 315,389 317.5,387.5 325,391.25 332.5,385 337.5,376 340,371.25 347.5,363.75 353.75,361.25 360,368.75 366.25,376.25 373.75,376.25 380,366.25 388.75,357.5 395,358 401.25,351.25 406.25,340 410,334 415,324 419.5,320.8 430,313 445,301 455,285 465,266 471,255 477.5,247 485,242.5 492.5,245.6 500,244.4 507.5,251 515,258 527.5,252.5 536,243.75 540,236 547.5,222.5 555,216.25 562.5,218.75 570,223.75 576.25,225.6 583.75,221.25 590,212.5 597.5,197.5 605,187.5 612.5,180 620,167.5 626,158.25 640,156.4 650,149.5 661.25,144.4 668.75,146.9 682.5,135 688.75,134.4 696.25,145 702.5,153.75 710,166.25 715,165 721.25,167.5 727.5,172.5 735,180 742.5,186.25 748.75,186.25 752.5,185 760,193" fill="none" stroke="#ff8000" stroke-width="1" stroke-linejoin="round" shape-rendering="crispEdges"/><polyline points="81.25,405.25 90,405 102.5,402.5 115,397.5 127.5,393 137.5,390 147.5,386.5 162.5,382.5 175,377.5 185,374.4 192.5,370.4 200,370 212.5,366.25 225,364.4 235,362.25 240,360.6 247.5,357.5 257.5,356 267.5,355 280,352.5 292.5,350.6 302.5,348.5 315,346.6 327.5,344.4 340,340.6 352.5,336.9 365,334.4 377.5,331.9 390,328.75 402.5,325.6 415,320 427.5,313.75 440,306.5 452.5,299.4 465,293.75 475,287 483.75,280 493.75,274.4 505,269.5 515,265 527.5,258.5 540,252 552.5,243 570,236.25 590,226.25 602.5,217.5 615,208 627.5,198.75 640,190 652.5,183.75 665,176.25 671.25,173.75 677.5,168 690,161.25 702.5,156.25 715,152.5 727.5,149.4 740,146.9 752.5,145 760,144" fill="none" stroke="#ff0000" stroke-width="1" stroke-linejoin="round" shape-rendering="crispEdges"/><polyline points="81.25,462.25 87.5,461.9 93.75,457.5 100,451.25 106.25,443.75 112.5,431.25 118.75,425 125,420 131.25,413.75 137.5,406.25 145,400.6 152.5,398 160,393.75 167.5,386.25 175,381.25 185,375.6 192.5,370.6 200,371.9 207.5,374.4 215,378.75 222.5,387.5 228.75,392.5 235,394.75 237.5,393.75 247.5,389.4 260,389 272.5,386.5 292.5,386 300,385.25 307.5,386.25 317.5,387.5 323.75,389.4 332.5,389.4 337.5,382.5 340,381.25 346.25,376.25 352.5,373.75 360,375 366.25,377.5 373.75,376.9 381.25,373.75 387.5,370 395,367.5 402.5,362.5 407.5,355 415,342.5 422.5,333.75 430,327.5 437.5,317.5 443.75,310 448.75,303.75 457.5,288.75 467.5,267.5 477.5,250 485,238.75 496,231 502.5,230.6 515,237 527.5,236 536,240 542.5,235 547.5,228.75 556.25,224.4 565,224.4 575,228.75 583.75,230 590,226.25 597.5,217.5 605,206.25 612.5,195 620,180 627.5,171.25 633.75,165 640,160.6 652.5,152.5 661.25,148 668.75,147.5 677.5,142.5 686.25,135 693.75,134.4 702.5,137.5 711.25,145 720,151.25 727.5,153.5 735,152.5 743.75,150 752.5,149.4 760,148" fill="none" stroke="#800000" stroke-width="1" stroke-linejoin="round" shape-rendering="crispEdges"/><polyline points="81.25,514 87.5,514 100,510 112.5,506.25 125,501.9 135,496.25 145,487.5 155,480 165,470 175,461.25 187.5,452.5 200,442.5 212.5,433.75 225,428 237.5,421.25 247.5,418.75 262.5,419.4 275,420 287.5,418.75 300,417.5 312.5,417.5 325,418 337.5,416.75 352.5,413 365,410.6 377.5,409.4 390,406.9 402.5,401.25 415,392.5 427.5,383.75 440,375 452.5,365 465,355 477.5,343.75 490,333.5 500,325 515,311 533.75,295 550,284.4 565,277.5 590,263.75 615,247.5 640,233 665,215 677.5,205 690,198 700,194.4 712.5,188.75 725,186.25 737.5,186.9 750,190.6 759.5,193" fill="none" stroke="#00ffff" stroke-width="1" stroke-linejoin="round" shape-rendering="crispEdges"/><polyline points="81.25,523.5 100,520 112.5,516 125,510.6 135,505.6 145,497.5 155,489.4 165,480 175,471.25 187.5,460.6 200,451.25 212.5,441.9 225,436 237.5,430 247.5,428 262.5,428.75 275,429.4 287.5,428 300,426.5 312.5,426.5 325,428 337.5,426.25 352.5,422.5 365,419.4 377.5,418 390,416.25 402.5,410.6 415,401.9 427.5,393 440,384.4 452.5,374.4 465,364.4 477.5,353.75 490,343 500,335 515,325 533.75,308.75 550,296 562.5,288 590,275 615,258.75 640,245 665,226.25 677.5,215 690,207.5 700,203 712.5,197.5 725,195.6 737.5,196.9 750,200 759.5,203.75" fill="none" stroke="#00ffff" stroke-width="1" stroke-linejoin="round" shape-rendering="crispEdges"/><polyline points="81.25,518.5 100,514.75 112.5,510.5 125,505.6 135,500.6 145,492.5 155,484.4 165,475 175,465.6 187.5,456.25 200,446.25 212.5,436.9 225,431.5 237.5,425 247.5,423 262.5,423.75 275,424.75 287.5,423 300,421.9 312.5,421.9 325,423.75 337.5,421.9 352.5,417.5 365,414.4 377.5,413 390,411.25 402.5,405.6 415,396.9 427.5,388 440,379.4 452.5,369.4 465,359.4 477.5,348.75 490,337.5 500,329.4 515,317.5 533.75,301 550,290 565,283 590,267.5 615,252.5 640,238 665,220 677.5,209.4 690,202.5 700,198.75 712.5,193 725,191 737.5,192.5 750,195.6 759.5,198.75" fill="none" stroke="#ffff00" stroke-width="2.6" stroke-linejoin="round"/><polyline points="81.25,518.5 100,514.75 112.5,510.5 125,505.6 135,500.6 145,492.5 155,484.4 165,475 175,465.6 187.5,456.25 200,446.25 212.5,436.9 225,431.5 237.5,425 247.5,423 262.5,423.75 275,424.75 287.5,423 300,421.9 312.5,421.9 325,423.75 337.5,421.9 352.5,417.5 365,414.4 377.5,413 390,411.25 402.5,405.6 415,396.9 427.5,388 440,379.4 452.5,369.4 465,359.4 477.5,348.75 490,337.5 500,329.4 515,317.5 533.75,301 550,290 565,283 590,267.5 615,252.5 640,238 665,220 677.5,209.4 690,202.5 700,198.75 712.5,193 725,191 737.5,192.5 750,195.6 759.5,198.75" fill="none" stroke="#008040" stroke-width="1" stroke-linejoin="round" shape-rendering="crispEdges"/><polyline points="81.25,520 87.5,517 93.75,510 100,498.75 106.25,485 112.5,467.5 117.5,458 125,453.75 133.75,450.6 142.5,445 152.5,443 157.5,444.4 165,436.25 172.5,429.4 181.25,423 190,418.75 197.5,420 206.25,421.9 213.75,423 218.75,431.25 223.75,440.6 227.5,443 232.5,436.25 240,426.9 247.5,419.4 253.75,421.9 261.25,431.25 268.75,442.5 276.25,435.6 281.25,432.5 290,430 297.5,427.5 306.25,428 315,427.5 323.75,429.4 331.25,422.5 338.75,412.5 346.25,403.75 352.5,400 360,406.9 366.9,414.4 375,413.75 381.25,405 388.75,397.5 395,397.5 401.25,391.25 407.5,377.5 415,365 421.25,356.25 427.5,353 433.75,350 442.5,343 451,332.5 462.5,313 470,300 476,288 482.5,283 490,283.75 500,287.5 515,298 523.75,295 537.5,284 543.75,272.5 547.5,263.75 556.25,257.5 565,262.5 573.75,265 582.5,265 590,255 598.75,240 610,223 617.5,212.5 626.25,200.6 635,198.75 643.75,196.25 652.5,190 661.25,186.25 670,188 677.5,182.5 688.75,176.25 693.75,185 700,197.5 706,204 715,208 722.5,212.5 730,222 737.5,227 745,231 752.5,232.5 759.5,237" fill="none" stroke="#ff00ff" stroke-width="1" stroke-linejoin="round" shape-rendering="crispEdges"/><polyline points="81.25,508 87.5,507.5 93.75,498.75 100,485 106.25,470 112.5,453.75 117.5,445.6 125,441.25 133.75,437.5 142.5,432.5 152.5,431.9 160,431.25 165,423.75 172.5,417.5 181.25,411.25 190,406.25 197.5,408.75 202.5,410.6 213.75,410.6 218.75,420 223.75,428.75 227.5,431.9 232.5,425 240,415 247.5,407.5 253.75,410 261.25,418.75 268.75,428.75 276.25,421.9 281.25,419.4 290,418 297.5,415 306.25,415 315,415 323.75,418 331.25,410 338.75,400 346.25,392.5 352.5,388 360,395 367.5,403 375,403 381.25,392.5 388.75,385 395,385 401.25,380 407.5,365 415,353.75 421.25,346.25 427.5,343 433.75,338.5 443.75,327.5 455,311 461,300 471,285 477.5,273.75 485,270 500,273 513.75,285.6 521,283 537.5,267.5 543.75,257 548.75,247 556.25,245 565,250 573.75,254.4 580,252.5 590,238.75 598.75,223.75 610,210 617.5,201.25 626.25,188 635,184.4 643.75,182.5 652.5,178.75 660,173.75 668.75,171.25 677.5,168.75 685,165 688.75,163.5 692.5,170 698,180 702.5,186 706.25,192.5 715,195 722.5,198.75 730,206.9 737.5,212.5 745,216.25 752.5,214.4 759.5,222.5" fill="none" stroke="#ff00ff" stroke-width="1" stroke-linejoin="round" shape-rendering="crispEdges"/><polyline points="81.25,514.4 87.5,512.5 93.75,503.75 100,491.25 106.25,477.5 112.5,460 117.5,451.25 125,446.9 133.75,443.75 142.5,438 152.5,436.9 160,436.25 165,429.4 172.5,423 181.25,416.9 190,412.5 197.5,414.4 206.25,418 213.75,418 218.75,425 223.75,435 227.5,439.4 232.5,431.25 240,421.25 247.5,413.75 253.75,416.25 261.25,425 268.75,436.9 276.25,428.75 281.25,425.6 290,423 297.5,421.25 306.25,420.6 315,420.6 323.75,423.75 331.25,416.25 338.75,405.6 346.25,398 352.5,394.4 360,401.25 366.9,409.4 375,408.75 381.25,398.75 388.75,391.25 395,391.25 401.25,386.25 407.5,371.25 415,360 421.25,351.25 427.5,347.5 433.75,345 442.5,336 450,326 457.5,313.75 467.5,298 475,283.75 480,278 487.5,276 500,280 515,291 522.5,288 537.5,277 545,262.5 550,257 556.25,251.25 565,255 573.75,259.4 581.25,258 590,247 598.75,232.5 610,217.5 617.5,207 626.25,193.75 635,193 643.75,188.75 652.5,183.75 661.25,179.4 670,180.6 677.5,174.4 687.5,170.6 693.75,178.75 697.5,188.75 703.75,195 712.5,201.25 720,203.75 727.5,207.5 735,214.4 742.5,220 750,221.25 756.25,220 759.5,224.4" fill="none" stroke="#00ff00" stroke-width="1" stroke-linejoin="round" shape-rendering="crispEdges"/><polyline points="81.25,576.25 97.5,577 107.5,583.75 120,591.25 130,594.5 136.25,593 145,580 152.5,570 165,556.25 175,547.5 187.5,535 192.5,532.5 202.5,515 212.5,500 225,475 231.25,466.25 240,458 250,457.5 262.5,458.5 270,462.5 280,459.4 293.75,457.5 312.5,457.5 327.5,458 337.5,461.25 351.25,464.75 357.5,461.25 366.25,453.75 373.75,452.5 380,454 390,455.5 410,449.25 422.5,454.25 430,451.25 460,447 466.25,442 478.75,445.5 492.5,438.75 500,427.5 510,405 520,390 530,372.5 540,356.25 552.5,350 562.5,340 570,325 580,315 590,310 602.5,312.5 615,318.75 625,322.5 635,318.75 650,305 665,287.5 675,277.5 690,270 693.75,269.4 705,255 716.25,238 722.5,230.6 727.5,229.4 737.5,233.75 745,240 752.5,240 758.75,246.9" fill="none" stroke="#000000" stroke-width="1" stroke-linejoin="round" shape-rendering="crispEdges"/><polyline points="78.75,505 87.5,506.25 100,503.75 112.5,500 125,495 137.5,491.25 150,488 162.5,483.75 175,480 187.5,475 200,471.25 212.5,467.5 225,466.5 237.5,463.75 250,460.6 262.5,459 275,457.5 287.5,455 300,452.75 312.5,451.25 325,449.4 337.5,445.6 350,442.5 362.5,439.75 375,438 385,435.6 392.5,433 402.5,428.75 415,424 427.5,418.75 440,413 452.5,406.25 465,399.5 477.5,390 490,383 500,377.5 510,373.75 530,365 550,352.5 565,345 580,340 602.5,325 627.5,307.5 652.5,292.5 662.5,287.5 675,278.75 687.5,272.5 700,268 712.5,264.4 725,261.25 737.5,259.4 750,257 759.5,256.9" fill="none" stroke="#000000" stroke-width="2.6" stroke-linejoin="round"/><g shape-rendering="crispEdges"><rect x="80" y="491" width="1" height="19" fill="#000000"/><rect x="78" y="504" width="5" height="3" fill="#000000"/><rect x="87" y="505" width="1" height="15" fill="#000000"/><rect x="85" y="507" width="5" height="3" fill="#000000"/><rect x="94" y="476" width="1" height="19" fill="#000000"/><rect x="92.5" y="478.5" width="4" height="15" fill="#fff" stroke="#000000"/><rect x="101" y="461" width="1" height="14" fill="#000000"/><rect x="99.5" y="466.5" width="4" height="2" fill="#fff" stroke="#000000"/><rect x="108" y="431" width="1" height="32" fill="#0000ff"/><rect x="106.5" y="432.5" width="4" height="29" fill="#fff" stroke="#0000ff"/><rect x="115" y="421" width="1" height="16" fill="#0000ff"/><rect x="113.5" y="424.5" width="4" height="11" fill="#fff" stroke="#0000ff"/><rect x="122" y="418" width="1" height="26" fill="#0000ff"/><rect x="120" y="421" width="5" height="15" fill="#0000ff"/><rect x="129" y="438" width="1" height="14" fill="#0000ff"/><rect x="127" y="440" width="5" height="2" fill="#0000ff"/><rect x="136" y="434" width="1" height="20" fill="#0000ff"/><rect x="134.5" y="434.5" width="4" height="12" fill="#fff" stroke="#0000ff"/><rect x="143" y="431" width="1" height="21" fill="#0000ff"/><rect x="141.5" y="432.5" width="4" height="12" fill="#fff" stroke="#0000ff"/><rect x="150" y="423" width="1" height="12" fill="#0000ff"/><rect x="148" y="431" width="5" height="2" fill="#0000ff"/><rect x="157" y="417" width="1" height="27" fill="#0000ff"/><rect x="155" y="425" width="5" height="17" fill="#0000ff"/><rect x="164" y="408" width="1" height="30" fill="#0000ff"/><rect x="162.5" y="411.5" width="4" height="26" fill="#fff" stroke="#0000ff"/><rect x="171" y="401" width="1" height="28" fill="#0000ff"/><rect x="169" y="414" width="5" height="3" fill="#0000ff"/><rect x="178" y="408" width="1" height="16" fill="#0000ff"/><rect x="176.5" y="408.5" width="4" height="7" fill="#fff" stroke="#0000ff"/><rect x="185" y="398" width="1" height="16" fill="#0000ff"/><rect x="183" y="401" width="5" height="5" fill="#0000ff"/><rect x="192" y="401" width="1" height="15" fill="#0000ff"/><rect x="190.5" y="406.5" width="4" height="9" fill="#fff" stroke="#0000ff"/><rect x="199" y="409" width="1" height="20" fill="#0000ff"/><rect x="197" y="420" width="5" height="2" fill="#0000ff"/><rect x="206" y="415" width="1" height="13" fill="#0000ff"/><rect x="204" y="418" width="5" height="2" fill="#0000ff"/><rect x="213" y="413" width="1" height="13" fill="#0000ff"/><rect x="211.5" y="416.5" width="4" height="2" fill="#fff" stroke="#0000ff"/><rect x="220" y="422" width="1" height="33" fill="#0000ff"/><rect x="218" y="422" width="5" height="32" fill="#0000ff"/><rect x="227" y="444" width="1" height="21" fill="#0000ff"/><rect x="225" y="444" width="5" height="18" fill="#0000ff"/><rect x="234" y="415" width="1" height="37" fill="#0000ff"/><rect x="232.5" y="418.5" width="4" height="32" fill="#fff" stroke="#0000ff"/><rect x="241" y="397" width="1" height="24" fill="#0000ff"/><rect x="239.5" y="398.5" width="4" height="21" fill="#fff" stroke="#0000ff"/><rect x="248" y="388" width="1" height="13" fill="#0000ff"/><rect x="246" y="398" width="5" height="2" fill="#0000ff"/><rect x="255" y="401" width="1" height="42" fill="#0000ff"/><rect x="253" y="401" width="5" height="25" fill="#0000ff"/><rect x="262" y="410" width="1" height="33" fill="#0000ff"/><rect x="260" y="424" width="5" height="18" fill="#0000ff"/><rect x="269" y="447" width="1" height="18" fill="#000000"/><rect x="267" y="447" width="5" height="12" fill="#000000"/><rect x="276" y="410" width="1" height="36" fill="#0000ff"/><rect x="274.5" y="416.5" width="4" height="29" fill="#fff" stroke="#0000ff"/><rect x="283" y="413" width="1" height="9" fill="#0000ff"/><rect x="281" y="415" width="5" height="2" fill="#0000ff"/><rect x="290" y="421" width="1" height="6" fill="#0000ff"/><rect x="288" y="423" width="5" height="3" fill="#0000ff"/><rect x="297" y="406" width="1" height="30" fill="#0000ff"/><rect x="295" y="412" width="5" height="4" fill="#0000ff"/><rect x="304" y="418" width="1" height="14" fill="#0000ff"/><rect x="302" y="419" width="5" height="2" fill="#0000ff"/><rect x="311" y="412" width="1" height="24" fill="#0000ff"/><rect x="309" y="415" width="5" height="9" fill="#0000ff"/><rect x="318" y="414" width="1" height="17" fill="#000000"/><rect x="316.5" y="416.5" width="4" height="5" fill="#fff" stroke="#000000"/><rect x="325" y="418" width="1" height="14" fill="#000000"/><rect x="323" y="421" width="5" height="11" fill="#000000"/><rect x="332" y="400" width="1" height="28" fill="#000000"/><rect x="330.5" y="404.5" width="4" height="19" fill="#fff" stroke="#000000"/><rect x="339" y="379" width="1" height="26" fill="#000000"/><rect x="337.5" y="381.5" width="4" height="22" fill="#fff" stroke="#000000"/><rect x="346" y="373" width="1" height="18" fill="#000000"/><rect x="344" y="378" width="5" height="8" fill="#000000"/><rect x="353" y="375" width="1" height="16" fill="#000000"/><rect x="351.5" y="384.5" width="4" height="2" fill="#fff" stroke="#000000"/><rect x="360" y="388" width="1" height="24" fill="#000000"/><rect x="358" y="393" width="5" height="19" fill="#000000"/><rect x="367" y="418" width="1" height="17" fill="#000000"/><rect x="365" y="418" width="5" height="11" fill="#000000"/><rect x="374" y="400" width="1" height="19" fill="#000000"/><rect x="372" y="405" width="5" height="4" fill="#000000"/><rect x="381" y="374" width="1" height="32" fill="#000000"/><rect x="379.5" y="378.5" width="4" height="27" fill="#fff" stroke="#000000"/><rect x="388" y="363" width="1" height="22" fill="#000000"/><rect x="386" y="365" width="5" height="13" fill="#000000"/><rect x="395" y="383" width="1" height="15" fill="#000000"/><rect x="393" y="386" width="5" height="6" fill="#000000"/><rect x="402" y="362" width="1" height="34" fill="#000000"/><rect x="400.5" y="368.5" width="4" height="21" fill="#fff" stroke="#000000"/><rect x="409" y="329" width="1" height="29" fill="#0000ff"/><rect x="407.5" y="335.5" width="4" height="22" fill="#fff" stroke="#0000ff"/><rect x="416" y="324" width="1" height="18" fill="#0000ff"/><rect x="414" y="333" width="5" height="7" fill="#0000ff"/><rect x="423" y="330" width="1" height="14" fill="#0000ff"/><rect x="421.5" y="334.5" width="4" height="6" fill="#fff" stroke="#0000ff"/><rect x="430" y="324" width="1" height="20" fill="#0000ff"/><rect x="428" y="332" width="5" height="10" fill="#0000ff"/><rect x="437" y="325" width="1" height="21" fill="#0000ff"/><rect x="435.5" y="327.5" width="4" height="13" fill="#fff" stroke="#0000ff"/><rect x="444" y="311" width="1" height="17" fill="#0000ff"/><rect x="442" y="321" width="5" height="4" fill="#0000ff"/><rect x="451" y="302" width="1" height="18" fill="#0000ff"/><rect x="449.5" y="302.5" width="4" height="17" fill="#fff" stroke="#0000ff"/><rect x="458" y="281" width="1" height="14" fill="#0000ff"/><rect x="456.5" y="285.5" width="4" height="9" fill="#fff" stroke="#0000ff"/><rect x="465" y="272" width="1" height="30" fill="#0000ff"/><rect x="463.5" y="284.5" width="4" height="2" fill="#fff" stroke="#0000ff"/><rect x="472" y="245" width="1" height="43" fill="#0000ff"/><rect x="470.5" y="254.5" width="4" height="33" fill="#fff" stroke="#0000ff"/><rect x="479" y="240" width="1" height="23" fill="#0000ff"/><rect x="477" y="244" width="5" height="19" fill="#0000ff"/><rect x="486" y="267" width="1" height="19" fill="#0000ff"/><rect x="484" y="269" width="5" height="6" fill="#0000ff"/><rect x="493" y="275" width="1" height="15" fill="#0000ff"/><rect x="491" y="279" width="5" height="9" fill="#0000ff"/><rect x="500" y="277" width="1" height="18" fill="#0000ff"/><rect x="498.5" y="278.5" width="4" height="13" fill="#fff" stroke="#0000ff"/><rect x="507" y="286" width="1" height="14" fill="#0000ff"/><rect x="505" y="293" width="5" height="4" fill="#0000ff"/><rect x="514" y="289" width="1" height="21" fill="#0000ff"/><rect x="512" y="298" width="5" height="11" fill="#0000ff"/><rect x="521" y="276" width="1" height="28" fill="#0000ff"/><rect x="519.5" y="279.5" width="4" height="24" fill="#fff" stroke="#0000ff"/><rect x="528" y="273" width="1" height="17" fill="#0000ff"/><rect x="526.5" y="280.5" width="4" height="5" fill="#fff" stroke="#0000ff"/><rect x="535" y="268" width="1" height="14" fill="#0000ff"/><rect x="533.5" y="269.5" width="4" height="12" fill="#fff" stroke="#0000ff"/><rect x="542" y="234" width="1" height="23" fill="#0000ff"/><rect x="540.5" y="239.5" width="4" height="15" fill="#fff" stroke="#0000ff"/><rect x="549" y="235" width="1" height="7" fill="#0000ff"/><rect x="547.5" y="236.5" width="4" height="2" fill="#fff" stroke="#0000ff"/><rect x="556" y="237" width="1" height="9" fill="#0000ff"/><rect x="554.5" y="242.5" width="4" height="2" fill="#fff" stroke="#0000ff"/><rect x="563" y="254" width="1" height="22" fill="#0000ff"/><rect x="561" y="255" width="5" height="7" fill="#0000ff"/><rect x="570" y="244" width="1" height="25" fill="#0000ff"/><rect x="568" y="265" width="5" height="4" fill="#0000ff"/><rect x="577" y="260" width="1" height="12" fill="#0000ff"/><rect x="575.5" y="262.5" width="4" height="9" fill="#fff" stroke="#0000ff"/><rect x="584" y="243" width="1" height="19" fill="#0000ff"/><rect x="582.5" y="245.5" width="4" height="13" fill="#fff" stroke="#0000ff"/><rect x="591" y="217" width="1" height="15" fill="#0000ff"/><rect x="589.5" y="227.5" width="4" height="2" fill="#fff" stroke="#0000ff"/><rect x="598" y="201" width="1" height="16" fill="#0000ff"/><rect x="596.5" y="205.5" width="4" height="10" fill="#fff" stroke="#0000ff"/><rect x="605" y="195" width="1" height="16" fill="#0000ff"/><rect x="603" y="203" width="5" height="6" fill="#0000ff"/><rect x="612" y="192" width="1" height="16" fill="#0000ff"/><rect x="610.5" y="198.5" width="4" height="7" fill="#fff" stroke="#0000ff"/><rect x="619" y="176" width="1" height="27" fill="#0000ff"/><rect x="617.5" y="180.5" width="4" height="18" fill="#fff" stroke="#0000ff"/><rect x="626" y="166" width="1" height="12" fill="#0000ff"/><rect x="624" y="174" width="5" height="2" fill="#0000ff"/><rect x="633" y="174" width="1" height="21" fill="#0000ff"/><rect x="631" y="180" width="5" height="12" fill="#0000ff"/><rect x="640" y="180" width="1" height="11" fill="#0000ff"/><rect x="638" y="182" width="5" height="9" fill="#0000ff"/><rect x="647" y="175" width="1" height="13" fill="#0000ff"/><rect x="645.5" y="180.5" width="4" height="5" fill="#fff" stroke="#0000ff"/><rect x="654" y="165" width="1" height="16" fill="#0000ff"/><rect x="652.5" y="173.5" width="4" height="6" fill="#fff" stroke="#0000ff"/><rect x="661" y="164" width="1" height="20" fill="#0000ff"/><rect x="659.5" y="173.5" width="4" height="4" fill="#fff" stroke="#0000ff"/><rect x="668" y="150" width="1" height="45" fill="#0000ff"/><rect x="666" y="155" width="5" height="35" fill="#0000ff"/><rect x="675" y="160" width="1" height="15" fill="#0000ff"/><rect x="673.5" y="164.5" width="4" height="9" fill="#fff" stroke="#0000ff"/><rect x="682" y="158" width="1" height="11" fill="#0000ff"/><rect x="680.5" y="161.5" width="4" height="2" fill="#fff" stroke="#0000ff"/><rect x="689" y="163" width="1" height="9" fill="#0000ff"/><rect x="687" y="166" width="5" height="2" fill="#0000ff"/><rect x="696" y="181" width="1" height="27" fill="#0000ff"/><rect x="694" y="182" width="5" height="22" fill="#0000ff"/><rect x="703" y="200" width="1" height="19" fill="#0000ff"/><rect x="701.5" y="211.5" width="4" height="2" fill="#fff" stroke="#0000ff"/><rect x="710" y="188" width="1" height="37" fill="#0000ff"/><rect x="708" y="203" width="5" height="21" fill="#0000ff"/><rect x="717" y="200" width="1" height="18" fill="#0000ff"/><rect x="715.5" y="201.5" width="4" height="14" fill="#fff" stroke="#0000ff"/><rect x="724" y="209" width="1" height="21" fill="#0000ff"/><rect x="722" y="210" width="5" height="2" fill="#0000ff"/><rect x="731" y="209" width="1" height="23" fill="#0000ff"/><rect x="729" y="210" width="5" height="19" fill="#0000ff"/><rect x="738" y="195" width="1" height="39" fill="#0000ff"/><rect x="736" y="218" width="5" height="10" fill="#0000ff"/><rect x="745" y="224" width="1" height="18" fill="#000000"/><rect x="743.5" y="232.5" width="4" height="6" fill="#fff" stroke="#000000"/><rect x="752" y="216" width="1" height="20" fill="#000000"/><rect x="750.5" y="218.5" width="4" height="15" fill="#fff" stroke="#000000"/><rect x="759" y="223" width="1" height="25" fill="#ff0000"/><rect x="757" y="223" width="5" height="24" fill="#ff0000"/></g><path d="M198.5 338V362M189.5 342L198.5 362L207.5 342" fill="none" stroke="#808080" stroke-width="2.2" stroke-linecap="round" stroke-linejoin="miter"/><path d="M255 345V369M246 349L255 369L264 349" fill="none" stroke="#808080" stroke-width="2.2" stroke-linecap="round" stroke-linejoin="miter"/><path d="M324.5 355V380M315.5 360L324.5 380L333.5 360" fill="none" stroke="#808080" stroke-width="2.2" stroke-linecap="round" stroke-linejoin="miter"/><path d="M360 333V358M351 338L360 358L369 338" fill="none" stroke="#808080" stroke-width="2.2" stroke-linecap="round" stroke-linejoin="miter"/><path d="M493 217V242M484 222L493 242L502 222" fill="none" stroke="#808080" stroke-width="2.2" stroke-linecap="round" stroke-linejoin="miter"/><path d="M563 196V220M554 200L563 220L572 200" fill="none" stroke="#808080" stroke-width="2.2" stroke-linecap="round" stroke-linejoin="miter"/><path d="M570 212V237M561 217L570 237L579 217" fill="none" stroke="#808080" stroke-width="2.2" stroke-linecap="round" stroke-linejoin="miter"/><path d="M668 115V140M659 120L668 140L677 120" fill="none" stroke="#808080" stroke-width="2.2" stroke-linecap="round" stroke-linejoin="miter"/><path d="M696.5 122V148M687.5 128L696.5 148L705.5 128" fill="none" stroke="#808080" stroke-width="2.2" stroke-linecap="round" stroke-linejoin="miter"/><path d="M220 381V405M210.7 385L220 405L229.3 385" fill="none" stroke="#ff0000" stroke-width="2.2" stroke-linecap="round" stroke-linejoin="miter"/><path d="M261.5 366V390M252.2 370L261.5 390L270.8 370" fill="none" stroke="#ff0000" stroke-width="2.2" stroke-linecap="round" stroke-linejoin="miter"/><path d="M367 362V387M357.7 367L367 387L376.3 367" fill="none" stroke="#ff0000" stroke-width="2.2" stroke-linecap="round" stroke-linejoin="miter"/><path d="M703 152V177M693.7 157L703 177L712.3 157" fill="none" stroke="#ff0000" stroke-width="2.2" stroke-linecap="round" stroke-linejoin="miter"/><path d="M730.5 146V170M721.2 150L730.5 170L739.8 150" fill="none" stroke="#ff0000" stroke-width="2.2" stroke-linecap="round" stroke-linejoin="miter"/><path d="M738 163V187M728.7 167L738 187L747.3 167" fill="none" stroke="#ff0000" stroke-width="2.2" stroke-linecap="round" stroke-linejoin="miter"/><path d="M758.5 184V208M749.2 188L758.5 208L767.8 188" fill="none" stroke="#ff0000" stroke-width="2.2" stroke-linecap="round" stroke-linejoin="miter"/><path d="M255.5 320V345" stroke="#ff0000" stroke-width="1" shape-rendering="crispEdges"/><path d="M249.5 331L255.5 345L261.5 331" fill="none" stroke="#ff0000" stroke-width="1.25" stroke-linejoin="bevel"/><path d="M311.5 367V392.5" stroke="#ff0000" stroke-width="1" shape-rendering="crispEdges"/><path d="M305.5 378.5L311.5 392.5L317.5 378.5" fill="none" stroke="#ff0000" stroke-width="1.25" stroke-linejoin="bevel"/><path d="M724.5 145V182.5" stroke="#ff0000" stroke-width="1" shape-rendering="crispEdges"/><path d="M719.0 169.0L724.5 182.5L730.0 169.0" fill="none" stroke="#ff0000" stroke-width="1.25" stroke-linejoin="bevel"/><path d="M233.75 514V481M224.45 501L233.75 481L243.05 501" fill="none" stroke="#00ff00" stroke-width="2.2" stroke-linecap="round" stroke-linejoin="miter"/><path d="M275.5 510V477M266.2 497L275.5 477L284.8 497" fill="none" stroke="#00ff00" stroke-width="2.2" stroke-linecap="round" stroke-linejoin="miter"/><path d="M331.75 514V481M322.45 501L331.75 481L341.05 501" fill="none" stroke="#00ff00" stroke-width="2.2" stroke-linecap="round" stroke-linejoin="miter"/><path d="M373.75 481V449M364.45 469L373.75 449L383.05 469" fill="none" stroke="#00ff00" stroke-width="2.2" stroke-linecap="round" stroke-linejoin="miter"/><path d="M521.5 364.5V332.5M512.2 352.5L521.5 332.5L530.8 352.5" fill="none" stroke="#00ff00" stroke-width="2.2" stroke-linecap="round" stroke-linejoin="miter"/><path d="M583.5 317.5V286M574.2 306L583.5 286L592.8 306" fill="none" stroke="#00ff00" stroke-width="2.2" stroke-linecap="round" stroke-linejoin="miter"/><path d="M675 232.5V200.5M665.7 220.5L675 200.5L684.3 220.5" fill="none" stroke="#00ff00" stroke-width="2.2" stroke-linecap="round" stroke-linejoin="miter"/><path d="M752 296.5V264.5M742.7 284.5L752 264.5L761.3 284.5" fill="none" stroke="#00ff00" stroke-width="2.2" stroke-linecap="round" stroke-linejoin="miter"/><path d="M262.5 485V452.5" stroke="#00ff00" stroke-width="1" shape-rendering="crispEdges"/><path d="M256.5 466.5L262.5 452.5L268.5 466.5" fill="none" stroke="#00ff00" stroke-width="1.25" stroke-linejoin="bevel"/><path d="M570.5 335V302.5" stroke="#00ff00" stroke-width="1" shape-rendering="crispEdges"/><path d="M564.5 316.5L570.5 302.5L576.5 316.5" fill="none" stroke="#00ff00" stroke-width="1.25" stroke-linejoin="bevel"/><path d="M738.5 310V278" stroke="#00ff00" stroke-width="1" shape-rendering="crispEdges"/><path d="M732.5 292L738.5 278L744.5 292" fill="none" stroke="#00ff00" stroke-width="1.25" stroke-linejoin="bevel"/><path d="M716.9 270V238.5M707.9 259.5L716.9 238.5L725.9 259.5" fill="none" stroke="#808080" stroke-width="2.2" stroke-linecap="round" stroke-linejoin="miter"/><path d="M79 593L83 605" stroke="#00ff00" stroke-width="2.2"/><rect x="78" y="339" width="2" height="3" fill="#0000ff"/><path d="M78 476l2-3" stroke="#ff0000" stroke-width="1.2"/><text x="808" y="142.5" font-family="Liberation Sans,sans-serif" font-size="13.5" font-weight="bold" fill="#000"  textLength="28.25" lengthAdjust="spacing">4608</text><path d="M794 151.5H851" stroke="#ff0000" stroke-width="1" shape-rendering="crispEdges"/><text x="808" y="300.5" font-family="Liberation Sans,sans-serif" font-size="13.5" font-weight="bold" fill="#000"  textLength="28.25" lengthAdjust="spacing">4329</text><path d="M794 309.5H851" stroke="#ff0000" stroke-width="1" shape-rendering="crispEdges"/><text x="808" y="460" font-family="Liberation Sans,sans-serif" font-size="13.5" font-weight="bold" fill="#000"  textLength="28.25" lengthAdjust="spacing">4049</text><path d="M794 465.5H851" stroke="#ff0000" stroke-width="1" shape-rendering="crispEdges"/><text x="808" y="673.75" font-family="Liberation Sans,sans-serif" font-size="13.5" font-weight="bold" fill="#000"  textLength="28.25" lengthAdjust="spacing">3665</text><path d="M794 683.5H851" stroke="#ff0000" stroke-width="1" shape-rendering="crispEdges"/><text x="269" y="255" font-family="Liberation Sans,sans-serif" font-size="13.5" font-weight="bold" fill="#000"  textLength="118.5" lengthAdjust="spacing">Breakout Structure</text><text x="221" y="620.75" font-family="Liberation Sans,sans-serif" font-size="13.5" font-weight="bold" fill="#000"  textLength="47.5" lengthAdjust="spacing">Small T</text><text x="220" y="636.75" font-family="Liberation Sans,sans-serif" font-size="13.5" font-weight="bold" fill="#000"  textLength="64.25" lengthAdjust="spacing">collapsing</text><text x="501" y="597" font-family="Liberation Sans,sans-serif" font-size="13.5" font-weight="bold" fill="#000"  textLength="47.5" lengthAdjust="spacing">Small T</text><text x="185.5" y="747.5" font-family="Liberation Sans,sans-serif" font-size="13.5" font-weight="bold" fill="#000"  textLength="79" lengthAdjust="spacing">DB Structure</text><text x="774.5" y="211.5" font-family="Liberation Sans,sans-serif" font-size="13.5" font-weight="bold" fill="#000"  textLength="109.25" lengthAdjust="spacing">S/T SELL SIGNAL</text><text x="920.5" y="133" font-family="Liberation Sans,sans-serif" font-size="13.5" font-weight="bold" fill="#000"  textLength="169.25" lengthAdjust="spacing">Next Echo and Pulse Highs</text><text x="920.5" y="181" font-family="Liberation Sans,sans-serif" font-size="13.5" font-weight="bold" fill="#000"  textLength="128" lengthAdjust="spacing">* S/T SELL SIGNAL *</text><text x="920.5" y="197" font-family="Liberation Sans,sans-serif" font-size="13.5" font-weight="bold" fill="#000"  textLength="108" lengthAdjust="spacing">* SHORT ALERT *</text><text x="920.5" y="229" font-family="Liberation Sans,sans-serif" font-size="13.5" font-weight="bold" fill="#000"  textLength="216.75" lengthAdjust="spacing">S/T SELL Signal at 4456 on 15 Aug</text><text x="920.5" y="261" font-family="Liberation Sans,sans-serif" font-size="13.5" font-weight="bold" fill="#000"  textLength="215.5" lengthAdjust="spacing">T volume Osc: negative on 02 Aug</text><text x="920.5" y="277" font-family="Liberation Sans,sans-serif" font-size="13.5" font-weight="bold" fill="#000"  textLength="35" lengthAdjust="spacing">Down</text><text x="920.5" y="309" font-family="Liberation Sans,sans-serif" font-size="13.5" font-weight="bold" fill="#000"  textLength="175" lengthAdjust="spacing">Osc: SELL Signal on 01 Aug</text><text x="920.5" y="325" font-family="Liberation Sans,sans-serif" font-size="13.5" font-weight="bold" fill="#000"  textLength="35" lengthAdjust="spacing">Down</text><text x="920.5" y="405" font-family="Liberation Sans,sans-serif" font-size="13.5" font-weight="bold" fill="#000"  textLength="84.5" lengthAdjust="spacing">Click here for</text><text x="920.5" y="421" font-family="Liberation Sans,sans-serif" font-size="13.5" font-weight="bold" fill="#000"  textLength="120.25" lengthAdjust="spacing">More Information...</text><text x="920.5" y="709.25" font-family="Liberation Sans,sans-serif" font-size="13.5" font-weight="bold" fill="#000"  textLength="138.25" lengthAdjust="spacing">Next Projected Low(s)</text></svg>
<div class="abs" style="left:1189px;top:98px;width:59px;height:11px;background:#ffffe1;border-bottom:1px solid #000;overflow:hidden"><div class="sc" style="left:5px;top:-3.3px">4693.38</div></div>
<div class="sc" style="left:1196.5px;top:147.6px">4600.00</div>
<div class="sc" style="left:1196.5px;top:204.1px">4500.00</div>
<div class="sc" style="left:1196.5px;top:260.6px">4400.00</div>
<div class="sc" style="left:1196.5px;top:317.1px">4300.00</div>
<div class="sc" style="left:1196.5px;top:373.6px">4200.00</div>
<div class="sc" style="left:1196.5px;top:430.1px">4100.00</div>
<div class="sc" style="left:1196.5px;top:486.6px">4000.00</div>
<div class="sc" style="left:1196.5px;top:543.1px">3900.00</div>
<div class="sc" style="left:1196.5px;top:599.6px">3800.00</div>
<div class="sc" style="left:1196.5px;top:656.1px">3700.00</div>
<div class="sc" style="left:1196.5px;top:712.6px">3600.00</div>
<svg class="abs" style="left:1189px;top:98px" width="12" height="650" viewBox="1189 98 12 650"><g fill="#000" shape-rendering="crispEdges"><rect x="1190" y="114" width="1" height="1"/><rect x="1190" y="120" width="1" height="1"/><rect x="1190" y="126" width="3" height="1"/><rect x="1190" y="131" width="1" height="1"/><rect x="1190" y="137" width="1" height="1"/><rect x="1190" y="143" width="1" height="1"/><rect x="1190" y="148" width="1" height="1"/><rect x="1190" y="154" width="6" height="1"/><rect x="1190" y="160" width="1" height="1"/><rect x="1190" y="165" width="1" height="1"/><rect x="1190" y="171" width="1" height="1"/><rect x="1190" y="177" width="1" height="1"/><rect x="1190" y="182" width="3" height="1"/><rect x="1190" y="188" width="1" height="1"/><rect x="1190" y="194" width="1" height="1"/><rect x="1190" y="199" width="1" height="1"/><rect x="1190" y="205" width="1" height="1"/><rect x="1190" y="211" width="6" height="1"/><rect x="1190" y="216" width="1" height="1"/><rect x="1190" y="222" width="1" height="1"/><rect x="1190" y="227" width="1" height="1"/><rect x="1190" y="233" width="1" height="1"/><rect x="1190" y="239" width="3" height="1"/><rect x="1190" y="244" width="1" height="1"/><rect x="1190" y="250" width="1" height="1"/><rect x="1190" y="256" width="1" height="1"/><rect x="1190" y="261" width="1" height="1"/><rect x="1190" y="267" width="6" height="1"/><rect x="1190" y="273" width="1" height="1"/><rect x="1190" y="278" width="1" height="1"/><rect x="1190" y="284" width="1" height="1"/><rect x="1190" y="290" width="1" height="1"/><rect x="1190" y="295" width="3" height="1"/><rect x="1190" y="301" width="1" height="1"/><rect x="1190" y="307" width="1" height="1"/><rect x="1190" y="312" width="1" height="1"/><rect x="1190" y="318" width="1" height="1"/><rect x="1190" y="324" width="6" height="1"/><rect x="1190" y="329" width="1" height="1"/><rect x="1190" y="335" width="1" height="1"/><rect x="1190" y="340" width="1" height="1"/><rect x="1190" y="346" width="1" height="1"/><rect x="1190" y="352" width="3" height="1"/><rect x="1190" y="357" width="1" height="1"/><rect x="1190" y="363" width="1" height="1"/><rect x="1190" y="369" width="1" height="1"/><rect x="1190" y="374" width="1" height="1"/><rect x="1190" y="380" width="6" height="1"/><rect x="1190" y="386" width="1" height="1"/><rect x="1190" y="391" width="1" height="1"/><rect x="1190" y="397" width="1" height="1"/><rect x="1190" y="403" width="1" height="1"/><rect x="1190" y="408" width="3" height="1"/><rect x="1190" y="414" width="1" height="1"/><rect x="1190" y="420" width="1" height="1"/><rect x="1190" y="425" width="1" height="1"/><rect x="1190" y="431" width="1" height="1"/><rect x="1190" y="437" width="6" height="1"/><rect x="1190" y="442" width="1" height="1"/><rect x="1190" y="448" width="1" height="1"/><rect x="1190" y="453" width="1" height="1"/><rect x="1190" y="459" width="1" height="1"/><rect x="1190" y="465" width="3" height="1"/><rect x="1190" y="470" width="1" height="1"/><rect x="1190" y="476" width="1" height="1"/><rect x="1190" y="482" width="1" height="1"/><rect x="1190" y="487" width="1" height="1"/><rect x="1190" y="493" width="6" height="1"/><rect x="1190" y="499" width="1" height="1"/><rect x="1190" y="504" width="1" height="1"/><rect x="1190" y="510" width="1" height="1"/><rect x="1190" y="516" width="1" height="1"/><rect x="1190" y="521" width="3" height="1"/><rect x="1190" y="527" width="1" height="1"/><rect x="1190" y="533" width="1" height="1"/><rect x="1190" y="538" width="1" height="1"/><rect x="1190" y="544" width="1" height="1"/><rect x="1190" y="550" width="6" height="1"/><rect x="1190" y="555" width="1" height="1"/><rect x="1190" y="561" width="1" height="1"/><rect x="1190" y="566" width="1" height="1"/><rect x="1190" y="572" width="1" height="1"/><rect x="1190" y="578" width="3" height="1"/><rect x="1190" y="583" width="1" height="1"/><rect x="1190" y="589" width="1" height="1"/><rect x="1190" y="595" width="1" height="1"/><rect x="1190" y="600" width="1" height="1"/><rect x="1190" y="606" width="6" height="1"/><rect x="1190" y="612" width="1" height="1"/><rect x="1190" y="617" width="1" height="1"/><rect x="1190" y="623" width="1" height="1"/><rect x="1190" y="629" width="1" height="1"/><rect x="1190" y="634" width="3" height="1"/><rect x="1190" y="640" width="1" height="1"/><rect x="1190" y="646" width="1" height="1"/><rect x="1190" y="651" width="1" height="1"/><rect x="1190" y="657" width="1" height="1"/><rect x="1190" y="663" width="6" height="1"/><rect x="1190" y="668" width="1" height="1"/><rect x="1190" y="674" width="1" height="1"/><rect x="1190" y="679" width="1" height="1"/><rect x="1190" y="685" width="1" height="1"/><rect x="1190" y="691" width="3" height="1"/><rect x="1190" y="696" width="1" height="1"/><rect x="1190" y="702" width="1" height="1"/><rect x="1190" y="708" width="1" height="1"/><rect x="1190" y="713" width="1" height="1"/><rect x="1190" y="719" width="6" height="1"/><rect x="1190" y="725" width="1" height="1"/><rect x="1190" y="730" width="1" height="1"/><rect x="1190" y="736" width="1" height="1"/><rect x="1190" y="742" width="1" height="1"/></g></svg>
<div class="abs" style="left:1223px;top:732px;width:25px;height:16px;border:1px solid;border-color:#fff #404040 #404040 #fff;background:#d4d0c8"><svg width="23" height="14" viewBox="0 0 23 14" style="position:absolute;left:0;top:0"><path d="M11.500 2v10M4 4h15M5 4l-3 7M5 4l3 7M18 4l-3 7M18 4l3 7" stroke="#000" fill="none"/><path d="M2 11h6c0 3-6 3-6 0zM15 11h6c0 3-6 3-6 0z" fill="#e8e000" stroke="#000" stroke-width=".7"/><rect x="10" y="8" width="3" height="5" fill="#e8e000" stroke="#000" stroke-width=".6"/><rect x="1" y="1" width="6" height="5" fill="#808080"/></svg></div>
<div class="abs" style="left:76px;top:753px;width:1174px;height:1px;background:#707070"></div><div class="abs" style="left:76px;top:753px;width:1px;height:186px;background:#707070"></div>
<div class="abs" style="left:77px;top:754px;width:1172px;height:1px;background:#000"></div><div class="abs" style="left:77px;top:754px;width:1px;height:184px;background:#000"></div>
<div class="abs" style="left:78px;top:755px;width:1110px;height:166px;background:#fff"></div><div class="abs" style="left:113px;top:921px;width:1075px;height:1px;background:#000"></div>
<div class="abs" style="left:77px;top:940px;width:1174px;height:1px;background:#fff"></div><div class="abs" style="left:1250px;top:754px;width:1px;height:187px;background:#fff"></div><div class="abs" style="left:77px;top:941px;width:1174px;height:1px;background:#e6e4df"></div>
<div class="abs" style="left:1188px;top:754px;width:61px;height:185px;background:#d4d0c8;border:1px solid #000"></div>
<div class="abs" style="left:1189px;top:755px;width:59px;height:1px;background:#fff"></div>
<svg class="abs" style="left:78px;top:755px" width="1110" height="166" viewBox="78 755 1110 166"><g shape-rendering="crispEdges" fill="#0000ff"><rect x="80" y="889" width="1" height="24"/><rect x="87" y="889" width="1" height="25"/><rect x="94" y="889" width="1" height="19"/><rect x="101" y="889" width="1" height="5"/><rect x="108" y="872" width="1" height="17"/><rect x="115" y="855" width="1" height="34"/><rect x="122" y="834" width="1" height="55"/><rect x="129" y="823" width="1" height="66"/><rect x="136" y="816" width="1" height="73"/><rect x="143" y="814" width="1" height="75"/><rect x="150" y="815" width="1" height="74"/><rect x="157" y="817" width="1" height="72"/><rect x="164" y="814" width="1" height="75"/><rect x="171" y="810" width="1" height="79"/><rect x="178" y="807" width="1" height="82"/><rect x="185" y="804" width="1" height="85"/><rect x="192" y="802" width="1" height="87"/><rect x="199" y="805" width="1" height="84"/><rect x="206" y="810" width="1" height="79"/><rect x="213" y="812" width="1" height="77"/><rect x="220" y="822" width="1" height="67"/><rect x="227" y="834" width="1" height="55"/><rect x="234" y="840" width="1" height="49"/><rect x="241" y="841" width="1" height="48"/><rect x="248" y="840" width="1" height="49"/><rect x="255" y="842" width="1" height="47"/><rect x="262" y="839" width="1" height="50"/><rect x="269" y="849" width="1" height="40"/><rect x="276" y="858" width="1" height="31"/><rect x="283" y="868" width="1" height="21"/><rect x="290" y="873" width="1" height="16"/><rect x="297" y="874" width="1" height="15"/><rect x="304" y="869" width="1" height="20"/><rect x="311" y="871" width="1" height="18"/><rect x="318" y="876" width="1" height="13"/><rect x="325" y="879" width="1" height="10"/><rect x="332" y="881" width="1" height="8"/><rect x="339" y="876" width="1" height="13"/><rect x="346" y="868" width="1" height="21"/><rect x="353" y="861" width="1" height="28"/><rect x="360" y="856" width="1" height="33"/><rect x="367" y="859" width="1" height="30"/><rect x="374" y="865" width="1" height="24"/><rect x="381" y="868" width="1" height="21"/><rect x="388" y="868" width="1" height="21"/><rect x="395" y="867" width="1" height="22"/><rect x="402" y="857" width="1" height="32"/><rect x="409" y="843" width="1" height="46"/><rect x="416" y="832" width="1" height="57"/><rect x="423" y="826" width="1" height="63"/><rect x="430" y="814" width="1" height="75"/><rect x="437" y="805" width="1" height="84"/><rect x="444" y="803" width="1" height="86"/><rect x="451" y="801" width="1" height="88"/><rect x="458" y="794" width="1" height="95"/><rect x="465" y="787" width="1" height="102"/><rect x="472" y="777" width="1" height="112"/><rect x="479" y="766" width="1" height="123"/><rect x="486" y="762" width="1" height="127"/><rect x="493" y="765" width="1" height="124"/><rect x="500" y="769" width="1" height="120"/><rect x="507" y="781" width="1" height="108"/><rect x="514" y="798" width="1" height="91"/><rect x="521" y="807" width="1" height="82"/><rect x="528" y="811" width="1" height="78"/><rect x="535" y="814" width="1" height="75"/><rect x="542" y="808" width="1" height="81"/><rect x="549" y="800" width="1" height="89"/><rect x="556" y="794" width="1" height="95"/><rect x="563" y="796" width="1" height="93"/><rect x="570" y="797" width="1" height="92"/><rect x="577" y="808" width="1" height="81"/><rect x="584" y="816" width="1" height="73"/><rect x="591" y="818" width="1" height="71"/><rect x="598" y="810" width="1" height="79"/><rect x="605" y="803" width="1" height="86"/><rect x="612" y="795" width="1" height="94"/><rect x="619" y="787" width="1" height="102"/><rect x="626" y="781" width="1" height="108"/><rect x="633" y="782" width="1" height="107"/><rect x="640" y="784" width="1" height="105"/><rect x="647" y="787" width="1" height="102"/><rect x="654" y="790" width="1" height="99"/><rect x="661" y="796" width="1" height="93"/><rect x="668" y="799" width="1" height="90"/><rect x="675" y="800" width="1" height="89"/><rect x="682" y="802" width="1" height="87"/><rect x="689" y="806" width="1" height="83"/><rect x="696" y="815" width="1" height="74"/><rect x="703" y="828" width="1" height="61"/><rect x="710" y="841" width="1" height="48"/><rect x="717" y="854" width="1" height="35"/><rect x="724" y="868" width="1" height="21"/><rect x="731" y="877" width="1" height="12"/><rect x="738" y="881" width="1" height="8"/><rect x="745" y="888" width="1" height="1"/><rect x="752" y="889" width="1" height="9"/><rect x="759" y="889" width="1" height="15"/></g><polyline points="81.25,813 101.25,813 110,816.75 120,819.25 157.5,818.75 175,817.5 190,816.75 200,815 222.5,815.5 240,819.25 270,823.75 282.5,826.75 295,831.75 320,839.25 342.5,845.5 365,846.75 390,851 410,851.75 427.5,848 452.5,839.25 477.5,828 495,821.75 515,817.5 540,816 555,814.25 570,812.25 605,812.25 620,810 635,806.75 655,804.25 670,803.5 690,803.5 705,806 717.5,809.75 732.5,816.75 746.25,823.5 760,823.5" fill="none" stroke="#000" stroke-width="1" stroke-linejoin="round" shape-rendering="crispEdges"/><path d="M220 756V795M210.7 774.5L220 795L229.3 774.5" fill="none" stroke="#ff0000" stroke-width="1.6" stroke-linecap="round" stroke-linejoin="miter"/><path d="M584.25 756V791M574.95 770.5L584.25 791L593.55 770.5" fill="none" stroke="#ff0000" stroke-width="1.6" stroke-linecap="round" stroke-linejoin="miter"/><path d="M689.25 756V785M679.95 764.5L689.25 785L698.55 764.5" fill="none" stroke="#ff0000" stroke-width="1.6" stroke-linecap="round" stroke-linejoin="miter"/><path d="M409.5 925V908M403.5 921L409.5 908L415.5 921" fill="none" stroke="#00ff00" stroke-width="2.2" stroke-linecap="round" stroke-linejoin="miter"/><path d="M598.25 925V917.5M595.25 922.5L598.25 917.5L601.25 922.5" fill="none" stroke="#00ff00" stroke-width="2.2" stroke-linecap="round" stroke-linejoin="miter"/><text x="78" y="767.5" font-family="Liberation Sans,sans-serif" font-size="13.5" font-weight="bold" fill="#000"  textLength="51.6" lengthAdjust="spacing">Osc 5,35</text><text x="710.5" y="788.75" font-family="Liberation Sans,sans-serif" font-size="13.5" font-weight="bold" fill="#000"  textLength="96.25" lengthAdjust="spacing">Osc Sell Signal</text></svg>
<div class="sc" style="left:1197px;top:775.1px">150</div>
<div class="sc" style="left:1197px;top:811.1px">100</div>
<div class="sc" style="left:1197px;top:847.1px">50</div>
<div class="sc" style="left:1197px;top:882.1px">0</div>
<svg class="abs" style="left:1189px;top:756px" width="12" height="182" viewBox="1189 756 12 182"><g fill="#000" shape-rendering="crispEdges"><rect x="1190" y="918" width="1" height="1"/><rect x="1190" y="914" width="1" height="1"/><rect x="1190" y="910" width="1" height="1"/><rect x="1190" y="907" width="3" height="1"/><rect x="1190" y="903" width="1" height="1"/><rect x="1190" y="900" width="1" height="1"/><rect x="1190" y="896" width="1" height="1"/><rect x="1190" y="893" width="1" height="1"/><rect x="1190" y="889" width="6" height="1"/><rect x="1190" y="885" width="1" height="1"/><rect x="1190" y="882" width="1" height="1"/><rect x="1190" y="878" width="1" height="1"/><rect x="1190" y="875" width="1" height="1"/><rect x="1190" y="871" width="3" height="1"/><rect x="1190" y="868" width="1" height="1"/><rect x="1190" y="864" width="1" height="1"/><rect x="1190" y="860" width="1" height="1"/><rect x="1190" y="857" width="1" height="1"/><rect x="1190" y="853" width="6" height="1"/><rect x="1190" y="850" width="1" height="1"/><rect x="1190" y="846" width="1" height="1"/><rect x="1190" y="842" width="1" height="1"/><rect x="1190" y="839" width="1" height="1"/><rect x="1190" y="835" width="3" height="1"/><rect x="1190" y="832" width="1" height="1"/><rect x="1190" y="828" width="1" height="1"/><rect x="1190" y="825" width="1" height="1"/><rect x="1190" y="821" width="1" height="1"/><rect x="1190" y="817" width="6" height="1"/><rect x="1190" y="814" width="1" height="1"/><rect x="1190" y="810" width="1" height="1"/><rect x="1190" y="807" width="1" height="1"/><rect x="1190" y="803" width="1" height="1"/><rect x="1190" y="800" width="3" height="1"/><rect x="1190" y="796" width="1" height="1"/><rect x="1190" y="792" width="1" height="1"/><rect x="1190" y="789" width="1" height="1"/><rect x="1190" y="785" width="1" height="1"/><rect x="1190" y="782" width="6" height="1"/><rect x="1190" y="778" width="1" height="1"/><rect x="1190" y="774" width="1" height="1"/><rect x="1190" y="771" width="1" height="1"/><rect x="1190" y="767" width="1" height="1"/><rect x="1190" y="764" width="3" height="1"/><rect x="1190" y="760" width="1" height="1"/></g></svg>
<div class="abs" style="left:1189px;top:831px;width:59px;height:15px;background:#ffffe1;border-bottom:1px solid #000"><div class="sc" style="left:22px;top:0px">71</div></div>
<div class="abs" style="left:78px;top:922px;width:1110px;height:16px;background:#d4d0c8"></div><div class="btn" style="left:79px;top:922px;width:16px;height:15px"><svg width="14" height="13" viewBox="0 0 14 13" ><path d="M8.500 2.500v7l-4-3.500z" fill="#000"/></svg></div><div class="btn" style="left:96px;top:922px;width:16px;height:15px"><svg width="14" height="13" viewBox="0 0 14 13" ><path d="M5.500 2.500v7l4-3.500z" fill="#000"/></svg></div><svg class="abs" style="left:78px;top:920px" width="1110" height="18" viewBox="78 920 1110 18"><path d="M112.5 920.5L118.75 936.75H168.75L175 920.5z" fill="#fff" stroke="none"/><path d="M112.5 921L118.75 936.75H168.75L175 921" fill="none" stroke="#000" stroke-width="1.1"/><path d="M168.75 936.75H213.75L207.5 921.5" fill="none" stroke="#000" stroke-width="1.1"/><path d="M211.0 936.75l2.5-6" fill="none" stroke="#000" stroke-width="1"/><path d="M213.75 936.75H298.75L292.5 921.5" fill="none" stroke="#000" stroke-width="1.1"/><path d="M296.0 936.75l2.5-6" fill="none" stroke="#000" stroke-width="1"/><path d="M298.75 936.75H382.5L376.25 921.5" fill="none" stroke="#000" stroke-width="1.1"/><path d="M379.75 936.75l2.5-6" fill="none" stroke="#000" stroke-width="1"/><path d="M382.5 936.75H447.5L441.25 921.5" fill="none" stroke="#000" stroke-width="1.1"/><path d="M444.75 936.75l2.5-6" fill="none" stroke="#000" stroke-width="1"/><path d="M447.5 936.75H507.5L501.25 921.5" fill="none" stroke="#000" stroke-width="1.1"/><path d="M504.75 936.75l2.5-6" fill="none" stroke="#000" stroke-width="1"/><path d="M507.5 936.75H607.5L614.5 921.5" fill="none" stroke="#000" stroke-width="1.1"/></svg><div class="tab" style="left:122px;letter-spacing:0px">Osc 5,35</div><div class="tab" style="left:176.25px;letter-spacing:-0.58px">CCI 20</div><div class="tab" style="left:217.5px;letter-spacing:-0.27px">MACD 19, 39, 9</div><div class="tab" style="left:302.5px;letter-spacing:-0.06px">Money Flow 11</div><div class="tab" style="left:386.25px;letter-spacing:-0.3px">RSI 14, 7, 3</div><div class="tab" style="left:451.25px;letter-spacing:-0.29px">RSI 2, 7, 3</div><div class="tab" style="left:510.5px;letter-spacing:-0.19px">On Balance Volume</div>
<div class="abs" style="left:1187px;top:921px;width:2px;height:17px;background:#000"></div>
<div class="abs" style="left:77px;top:943px;width:1112px;height:20px;border:1px solid #000;border-width:1.5px 1px 1.5px 1.5px;background:#d4d0c8;box-shadow:inset 1px 1px 0 #fff"></div>
<div class="abs" style="left:115px;top:945px;width:1px;height:16px;background:#000"></div><div class="abs info" style="left:117px;top:946px">Apr</div>
<div class="abs" style="left:402px;top:945px;width:1px;height:16px;background:#000"></div><div class="abs info" style="left:404px;top:946px">Jun</div>
<div class="abs" style="left:549px;top:945px;width:1px;height:16px;background:#000"></div><div class="abs info" style="left:551px;top:946px">Jul</div>
<div class="abs" style="left:689px;top:945px;width:1px;height:16px;background:#000"></div><div class="abs info" style="left:691px;top:946px">Aug</div>
<div class="abs info" style="left:227px;top:945px;width:56px;height:16px;background:#ffffe1;border:1px solid #000;padding:0 0 0 2px;line-height:14px;letter-spacing:-0.15px">05/02/23</div>
<div class="abs info" style="left:1189px;top:944px;width:60px;height:19px;background:#ffffe1;color:#00f;text-align:center;line-height:18px;border:1px solid;border-color:#808080 #fff #fff #808080">#2928</div>
<div class="abs" style="left:1250px;top:76px;width:1px;height:890px;background:#fff"></div>
<div class="btn dn" style="left:1254px;top:88px;width:23px;height:22px;"><svg width="21" height="20" viewBox="0 0 21 20" ><path d="M4 3.500l13.500 13.500M17.500 3.500l-13.500 13.500" stroke="#000" stroke-width="1.900"/></svg></div>
<div class="btn " style="left:1254px;top:110px;width:23px;height:22px;"><svg width="21" height="20" viewBox="0 0 21 20" ><path d="M4.500 3.500l2.500-1.500 11 11-2.500 3z" fill="#f0f000" stroke="#000" stroke-width="1.100"/><path d="M6 3l11 11" stroke="#000" stroke-width=".7"/><path d="M15.500 16l2.500-3 1 4z" fill="#800000" stroke="#400" stroke-width=".6"/><path d="M4.500 3.500l2.500-1.500-1.200 3.300z" fill="#000"/></svg></div>
<div class="btn " style="left:1254px;top:132px;width:23px;height:22px;"><svg width="21" height="20" viewBox="0 0 21 20" ><path d="M3 11.500l15-7.500" stroke="#00f" stroke-width="1.200"/><path d="M3 14l15-7.500" stroke="#000" stroke-width="1.200"/><path d="M3 16.500l15-7.500" stroke="#f00" stroke-width="1.200"/></svg></div>
<div class="btn " style="left:1254px;top:154px;width:23px;height:22px;"><svg width="21" height="20" viewBox="0 0 21 20" ><text x="4.75" y="8.500" font-family="Liberation Sans,sans-serif" font-size="9" fill="#000" textLength="11.5" lengthAdjust="spacingAndGlyphs">FIB</text><text x="3.6500000000000004" y="16.800" font-family="Liberation Sans,sans-serif" font-size="9" fill="#000" textLength="13.7" lengthAdjust="spacingAndGlyphs">RET</text></svg></div>
<div class="btn " style="left:1254px;top:176px;width:23px;height:22px;"><svg width="21" height="20" viewBox="0 0 21 20" ><text x="4.75" y="8.500" font-family="Liberation Sans,sans-serif" font-size="9" fill="#000" textLength="11.5" lengthAdjust="spacingAndGlyphs">FIB</text><text x="3.6500000000000004" y="16.800" font-family="Liberation Sans,sans-serif" font-size="9" fill="#000" textLength="13.7" lengthAdjust="spacingAndGlyphs">EXT</text></svg></div>
<div class="btn " style="left:1254px;top:198px;width:23px;height:22px;"><svg width="21" height="20" viewBox="0 0 21 20" ><text x="4.75" y="8.500" font-family="Liberation Sans,sans-serif" font-size="9" fill="#000" textLength="11.5" lengthAdjust="spacingAndGlyphs">FIB</text><text x="2.6500000000000004" y="16.800" font-family="Liberation Sans,sans-serif" font-size="9" fill="#000" textLength="15.7" lengthAdjust="spacingAndGlyphs">TIME</text></svg></div>
<div class="btn " style="left:1254px;top:220px;width:23px;height:22px;"><svg width="21" height="20" viewBox="0 0 21 20" ><path d="M4.500 12.500a7 7 0 1 1 12.500 0" fill="none" stroke="#f00" stroke-width="1.200"/><path d="M7 9.500a4 4 0 0 1 7.500 0" fill="none" stroke="#00f" stroke-width="1.200"/><text x="5" y="16.500" font-family="Liberation Sans,sans-serif" font-size="9" fill="#000" textLength="12" lengthAdjust="spacingAndGlyphs" stroke="#000" stroke-width=".25">FIB</text></svg></div>
<div class="btn " style="left:1254px;top:242px;width:23px;height:22px;"><svg width="21" height="20" viewBox="0 0 21 20" ><path d="M3 10l9-7.500M3 10l9 7" stroke="#080" stroke-width="1.100"/><path d="M3 10l15-8M3 10l15 8" stroke="#00f" stroke-width="1.100"/><path d="M3 10l15-4M3 10l15 3.500" stroke="#f00" stroke-width="1.100"/><path d="M3 10h16" stroke="#000" stroke-width="1.300"/><path d="M2.500 10l3-2v4z" fill="#000"/></svg></div>
<div class="btn " style="left:1254px;top:264px;width:23px;height:22px;"><svg width="21" height="20" viewBox="0 0 21 20" ><rect x="4" y="3" width="13" height="13" fill="#d4d0c8" stroke="#000" stroke-width="1.600"/><path d="M7.500 3v13M10.500 3v13M13.500 3v13M4 6.500h13M4 9.500h13M4 12.500h13" stroke="#808080" stroke-width="1" shape-rendering="crispEdges"/></svg></div>
<div class="btn " style="left:1254px;top:286px;width:23px;height:22px;"><svg width="21" height="20" viewBox="0 0 21 20" ><ellipse cx="10.500" cy="7" rx="7.300" ry="4.300" fill="#0ff" stroke="#f00" stroke-width="1.400"/><text x="3" y="17.500" font-family="Liberation Sans,sans-serif" font-size="7" font-weight="bold" fill="#000" textLength="15" lengthAdjust="spacingAndGlyphs">ELiPS</text></svg></div>
<div class="btn " style="left:1254px;top:308px;width:23px;height:22px;"><svg width="21" height="20" viewBox="0 0 21 20" ><path d="M3 9l14 8" stroke="#000080" stroke-width="1.100"/><path d="M5 12l7-9" stroke="#000080" stroke-width="1.100"/><path d="M7.500 14l6.500-8.500" stroke="#800000" stroke-width="1.100"/><path d="M10 15l5.500-7" stroke="#080" stroke-width="1.100"/><path d="M11.500 18l6.500-8.500" stroke="#000080" stroke-width="1.100"/></svg></div>
<div class="btn " style="left:1254px;top:330px;width:23px;height:22px;"><svg width="21" height="20" viewBox="0 0 21 20" ><text x="2" y="15" font-family="Liberation Sans,sans-serif" font-size="12" font-weight="bold" fill="#000" stroke="#000" stroke-width=".4" textLength="17" lengthAdjust="spacingAndGlyphs">PTI</text></svg></div>
<div class="btn " style="left:1254px;top:352px;width:23px;height:22px;"><svg width="21" height="20" viewBox="0 0 21 20" ><rect x="5.500" y="2.500" width="13" height="13" fill="#fff" stroke="#00f" stroke-width="1.300" shape-rendering="crispEdges"/><path d="M10 2v14M14.500 2v14M5 7h14M5 11.500h14" stroke="#00f" stroke-width="1.300" shape-rendering="crispEdges"/><path d="M3.500 2v15" stroke="#808080" stroke-width="1"/></svg></div>
<div class="btn " style="left:1254px;top:374px;width:23px;height:22px;"><svg width="21" height="20" viewBox="0 0 21 20" ><rect x="3" y="2" width="15" height="3" fill="#f0f"/><rect x="3" y="5" width="15" height="3" fill="#0ff"/><text x="3.500" y="17.500" font-family="Liberation Mono,monospace" font-size="9.500" fill="#000" textLength="14" lengthAdjust="spacingAndGlyphs">MOB</text></svg></div>
<div class="btn " style="left:1254px;top:396px;width:23px;height:22px;"><svg width="21" height="20" viewBox="0 0 21 20" ><circle cx="12.500" cy="7.500" r="5.300" fill="#fff" stroke="#000" stroke-width="1.100" stroke-dasharray="1.800 1.200"/><text x="12.500" y="11.500" text-anchor="middle" font-family="Liberation Sans,sans-serif" font-size="10.500" font-weight="bold" fill="#008000" stroke="#008000" stroke-width=".5">1</text><path d="M8 12l-2 2" stroke="#000"/><circle cx="4.500" cy="15.500" r="1.300" fill="none" stroke="#000" stroke-width=".8"/></svg></div>
<div class="btn " style="left:1254px;top:418px;width:23px;height:22px;"><svg width="21" height="20" viewBox="0 0 21 20" ><text x="10.500" y="16.500" text-anchor="middle" font-family="Liberation Serif,serif" font-size="18" font-weight="bold" fill="#000">A</text></svg></div>
<div class="btn " style="left:1254px;top:440px;width:23px;height:22px;"><svg width="21" height="20" viewBox="0 0 21 20" ><circle cx="8.500" cy="8" r="5" fill="#fff" stroke="#000" stroke-width="1.300"/><path d="M6 8h5M8.500 5.500v5" stroke="#000" stroke-width="1.100"/><path d="M12.500 12l5.500 5.500" stroke="#000" stroke-width="2.200"/></svg></div>
<div class="btn " style="left:1254px;top:466px;width:23px;height:22px;"><svg width="21" height="20" viewBox="0 0 21 20" ><path d="M4 6l3.500-3.500 7 7-3.500 4z" fill="#800000" stroke="#400000" stroke-width=".8"/><path d="M11 13.500l3.500-4 1.500 1.500-3.500 4z" fill="#fff" stroke="#808080" stroke-width=".5"/><path d="M12.500 15l3.500-4 3 3-3.500 4z" fill="#f0f000" stroke="#808000" stroke-width=".8"/></svg></div>
<div class="btn " style="left:1254px;top:488px;width:23px;height:22px;"><svg width="21" height="20" viewBox="0 0 21 20" ><rect x="3.500" y="3.500" width="14" height="14" fill="#fff" stroke="#000" stroke-dasharray="1 1" shape-rendering="crispEdges"/><path d="M5.500 5.500l3.500 3.500M15.500 5.500l-3.500 3.500M5.500 15.500l3.500-3.500M15.500 15.500l-3.500-3.500" stroke="#000" stroke-width="1.100"/><path d="M5 8v-3h3M13 5h3v3M5 13v3h3M13 16h3v-3" stroke="#000" fill="none" stroke-width="1.200"/><circle cx="10.500" cy="10.500" r=".8" fill="#000"/></svg></div>
<div class="btn " style="left:1254px;top:510px;width:23px;height:22px;"><svg width="21" height="20" viewBox="0 0 21 20" ><path d="M3.500 4.500h7v10h-7z" fill="#fff" stroke="#000" stroke-width="1.100"/><path d="M8.500 5.500l9-1.500v12l-9 1.500z" fill="#fff" stroke="#000" stroke-width="1.100"/><path d="M5 7h2M5 9.500h2M5 12h2M10.500 8.500l5-1M10.500 11l5-1M10.500 13.500l5-1" stroke="#000" stroke-width="1.100"/></svg></div>
<div class="btn dn" style="left:1254px;top:537px;width:23px;height:22px;"><svg width="21" height="20" viewBox="0 0 21 20" ><path d="M4 3h4.500v9a2.200 2.200 0 0 0 4.400 0v-9h4.500v9a6.700 6.700 0 0 1-13.400 0z" fill="#f00000"/><path d="M4 3h4.500v3h-4.500zM12.900 3h4.500v3h-4.500z" fill="#303030"/></svg></div>
<div class="abs" style="left:1251px;top:566px;width:29px;height:1px;background:#808080"></div><div class="abs" style="left:1251px;top:567px;width:29px;height:1px;background:#fff"></div>
<div class="abs" style="left:0;top:964px;width:77px;height:1px;background:#fff"></div>
<div class="abs" style="left:2px;top:968px;font-size:12px;letter-spacing:-0.41px">For Help, press F1</div>
<div class="abs" style="left:953px;top:968px;width:326px;height:15px;border:1px solid;border-color:#808080 #fff #fff #808080"></div>
<div class="abs" style="left:956.5px;top:968px;font-size:12px;letter-spacing:-0.3px">Page: 14 - SP 500 for blog</div></body></html>
